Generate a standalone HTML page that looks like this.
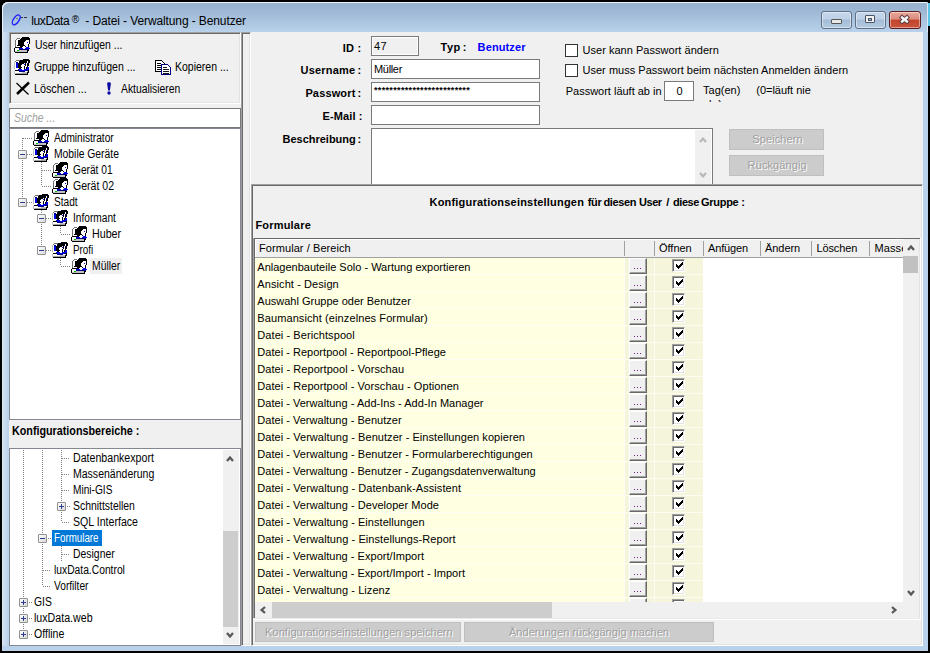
<!DOCTYPE html>
<html lang="de"><head><meta charset="utf-8"><title>luxData - Datei - Verwaltung - Benutzer</title>
<style>
html,body{margin:0;padding:0;background:#000;}
body{width:930px;height:653px;position:relative;overflow:hidden;font-family:"Liberation Sans", sans-serif;font-size:11px;}
div,span,svg{position:absolute;box-sizing:content-box;}
span{white-space:nowrap;}
</style></head><body>
<div style="left:0px;top:0px;width:930px;height:653px;background:#000;"></div>
<div style="left:2px;top:2px;width:926px;height:649px;background:#b9d1ea;border-radius:6px 2px 0 0;"></div>
<div style="left:2px;top:2px;width:926px;height:30px;border-radius:6px 2px 0 0;background:linear-gradient(#98b3d0,#9ab5d2 20%,#b9d1ea 100%);box-shadow:inset 1px 1px 0 #eef3f9, inset -1px 0 0 #dfe9f5;"></div>
<div style="left:2px;top:32px;width:7px;height:614px;background:linear-gradient(90deg,#e4edf7 0,#d3e1f1 1px,#c4d7ed 4px,#b9d1ea 7px);"></div>
<div style="left:928px;top:3px;width:2px;height:23px;background:#5cc4e4;"></div>
<svg style="left:9px;top:12px" width="22" height="16" viewBox="0 0 22 16"><ellipse cx="7.2" cy="7.9" rx="2.7" ry="5.6" transform="rotate(34 7.2 7.9)" fill="none" stroke="#1a1aff" stroke-width="1.35"/><rect x="7" y="6" width="2" height="1" fill="#776"/><rect x="12" y="5" width="2" height="1" fill="#333"/><rect x="15" y="5" width="3" height="1" fill="#333"/></svg>
<span style="left:31.30px;top:13.84px;font-size:12px;line-height:14px;color:#000;letter-spacing:-0.398px;">luxData</span>
<span style="left:71.80px;top:13.73px;font-size:10px;line-height:12px;color:#000;letter-spacing:1.025px;">®</span>
<span style="left:85.30px;top:13.84px;font-size:12px;line-height:14px;color:#000;letter-spacing:-0.109px;">- Datei - Verwaltung - Benutzer</span>
<div style="left:821px;top:11px;width:29px;height:16px;border:1px solid #5f6f86;border-radius:3px;background:linear-gradient(#c3d6eb 0%,#bdd0e6 45%,#a3bbd6 50%,#b4cae2 100%);box-shadow:inset 0 0 0 1px rgba(255,255,255,.45);"></div>
<div style="left:855px;top:11px;width:29px;height:16px;border:1px solid #5f6f86;border-radius:3px;background:linear-gradient(#c3d6eb 0%,#bdd0e6 45%,#a3bbd6 50%,#b4cae2 100%);box-shadow:inset 0 0 0 1px rgba(255,255,255,.45);"></div>
<div style="left:889px;top:11px;width:30px;height:16px;border:1px solid #5a1e1e;border-radius:3px;background:linear-gradient(#e9a99c 0%,#d98b7c 45%,#c4442b 50%,#c8553b 100%);box-shadow:inset 0 0 0 1px rgba(255,255,255,.45);"></div>
<div style="left:831px;top:19px;width:9px;height:3px;background:#e8e8e8;border:1px solid #555;border-radius:1px;"></div>
<div style="left:865px;top:15px;width:8px;height:6px;border:1px solid #4c5566;background:#f2f2f2;border-radius:1px;"></div><div style="left:868px;top:18px;width:2px;height:1px;border:1px solid #4c5566;background:#9db6d4;"></div>
<svg style="left:898px;top:14px" width="13" height="11" viewBox="0 0 13 11"><path d="M2.4 2.1 L10.6 8.9 M10.6 2.1 L2.4 8.9" stroke="#50343a" stroke-width="4.2"/><path d="M3.1 2.7 L9.9 8.3 M9.9 2.7 L3.1 8.3" stroke="#f6f6f6" stroke-width="2.4"/></svg>
<div style="left:9px;top:32px;width:914px;height:614px;background:#f0f0f0;"></div>
<div style="left:9px;top:32px;width:230px;height:70px;background:#f0f0f0;border:1px solid;border-color:#a0a0a0 #fff #fff #a0a0a0;box-shadow:inset 1px 1px 0 #696969, inset -1px -1px 0 #e3e3e3;"></div>
<svg style="left:14px;top:37px" width="16" height="16" viewBox="0 0 16 16" shape-rendering="crispEdges"><rect x="8" y="0" width="7" height="1" fill="#000"/><rect x="3" y="1" width="3" height="1" fill="#707070"/><rect x="7" y="1" width="9" height="1" fill="#000"/><rect x="2" y="2" width="1" height="1" fill="#707070"/><rect x="3" y="2" width="3" height="1" fill="#fff"/><rect x="6" y="2" width="10" height="1" fill="#000"/><rect x="1" y="3" width="1" height="1" fill="#707070"/><rect x="2" y="3" width="2" height="1" fill="#fff"/><rect x="4" y="3" width="8" height="1" fill="#000"/><rect x="12" y="3" width="3" height="1" fill="#fff"/><rect x="15" y="3" width="1" height="1" fill="#000"/><rect x="1" y="4" width="1" height="1" fill="#707070"/><rect x="2" y="4" width="2" height="1" fill="#fff"/><rect x="4" y="4" width="7" height="1" fill="#000"/><rect x="11" y="4" width="4" height="1" fill="#fff"/><rect x="15" y="4" width="1" height="1" fill="#000"/><rect x="1" y="5" width="1" height="1" fill="#707070"/><rect x="2" y="5" width="2" height="1" fill="#fff"/><rect x="4" y="5" width="6" height="1" fill="#000"/><rect x="10" y="5" width="3" height="1" fill="#fff"/><rect x="13" y="5" width="1" height="1" fill="#0000e0"/><rect x="14" y="5" width="1" height="1" fill="#fff"/><rect x="15" y="5" width="1" height="1" fill="#000"/><rect x="1" y="6" width="1" height="1" fill="#707070"/><rect x="2" y="6" width="2" height="1" fill="#fff"/><rect x="4" y="6" width="6" height="1" fill="#000"/><rect x="10" y="6" width="5" height="1" fill="#fff"/><rect x="15" y="6" width="1" height="1" fill="#000"/><rect x="1" y="7" width="1" height="1" fill="#707070"/><rect x="2" y="7" width="2" height="1" fill="#fff"/><rect x="4" y="7" width="6" height="1" fill="#000"/><rect x="10" y="7" width="4" height="1" fill="#fff"/><rect x="14" y="7" width="1" height="1" fill="#000"/><rect x="1" y="8" width="1" height="1" fill="#707070"/><rect x="2" y="8" width="1" height="1" fill="#fff"/><rect x="3" y="8" width="8" height="1" fill="#000"/><rect x="11" y="8" width="3" height="1" fill="#fff"/><rect x="14" y="8" width="1" height="1" fill="#000"/><rect x="1" y="9" width="1" height="1" fill="#707070"/><rect x="2" y="9" width="4" height="1" fill="#fff"/><rect x="6" y="9" width="3" height="1" fill="#000"/><rect x="9" y="9" width="2" height="1" fill="#fff"/><rect x="11" y="9" width="1" height="1" fill="#000"/><rect x="12" y="9" width="2" height="1" fill="#fff"/><rect x="14" y="9" width="1" height="1" fill="#000"/><rect x="1" y="10" width="7" height="1" fill="#000"/><rect x="8" y="10" width="4" height="1" fill="#fff"/><rect x="12" y="10" width="3" height="1" fill="#0000e0"/><rect x="0" y="11" width="1" height="1" fill="#000"/><rect x="1" y="11" width="4" height="1" fill="#fff"/><rect x="5" y="11" width="4" height="1" fill="#0000e0"/><rect x="9" y="11" width="2" height="1" fill="#fff"/><rect x="11" y="11" width="5" height="1" fill="#0000e0"/><rect x="0" y="12" width="1" height="1" fill="#000"/><rect x="1" y="12" width="4" height="1" fill="#fff"/><rect x="5" y="12" width="10" height="1" fill="#000080"/><rect x="0" y="13" width="1" height="1" fill="#000"/><rect x="1" y="13" width="2" height="1" fill="#fff"/><rect x="3" y="13" width="2" height="1" fill="#00c000"/><rect x="5" y="13" width="8" height="1" fill="#c0c0c0"/><rect x="13" y="13" width="2" height="1" fill="#000"/><rect x="0" y="14" width="1" height="1" fill="#000"/><rect x="1" y="14" width="12" height="1" fill="#c0c0c0"/><rect x="13" y="14" width="1" height="1" fill="#000"/><rect x="1" y="15" width="13" height="1" fill="#000"/></svg>
<span style="left:34.50px;top:37.84px;font-size:12px;line-height:14px;color:#000;transform:scaleX(0.8686);transform-origin:0 0;">User hinzufügen ...</span>
<svg style="left:14px;top:59px" width="16" height="16" viewBox="0 0 16 16" shape-rendering="crispEdges"><rect x="9" y="0" width="6" height="1" fill="#000"/><rect x="2" y="1" width="4" height="1" fill="#707070"/><rect x="6" y="1" width="10" height="1" fill="#000"/><rect x="1" y="2" width="1" height="1" fill="#707070"/><rect x="2" y="2" width="3" height="1" fill="#fff"/><rect x="5" y="2" width="8" height="1" fill="#000"/><rect x="13" y="2" width="1" height="1" fill="#fff"/><rect x="14" y="2" width="2" height="1" fill="#000"/><rect x="0" y="3" width="1" height="1" fill="#c0c0c0"/><rect x="1" y="3" width="1" height="1" fill="#fff"/><rect x="2" y="3" width="2" height="1" fill="#000080"/><rect x="4" y="3" width="1" height="1" fill="#fff"/><rect x="5" y="3" width="8" height="1" fill="#000"/><rect x="13" y="3" width="1" height="1" fill="#fff"/><rect x="14" y="3" width="2" height="1" fill="#000"/><rect x="0" y="4" width="1" height="1" fill="#c0c0c0"/><rect x="1" y="4" width="1" height="1" fill="#fff"/><rect x="2" y="4" width="2" height="1" fill="#0000e0"/><rect x="4" y="4" width="6" height="1" fill="#000"/><rect x="10" y="4" width="1" height="1" fill="#fff"/><rect x="11" y="4" width="1" height="1" fill="#000"/><rect x="12" y="4" width="1" height="1" fill="#fff"/><rect x="13" y="4" width="1" height="1" fill="#0000e0"/><rect x="14" y="4" width="1" height="1" fill="#000"/><rect x="0" y="5" width="1" height="1" fill="#c0c0c0"/><rect x="1" y="5" width="1" height="1" fill="#fff"/><rect x="2" y="5" width="2" height="1" fill="#0000e0"/><rect x="4" y="5" width="4" height="1" fill="#000"/><rect x="8" y="5" width="2" height="1" fill="#fff"/><rect x="10" y="5" width="1" height="1" fill="#0000e0"/><rect x="11" y="5" width="1" height="1" fill="#000"/><rect x="12" y="5" width="1" height="1" fill="#fff"/><rect x="13" y="5" width="2" height="1" fill="#000"/><rect x="0" y="6" width="1" height="1" fill="#c0c0c0"/><rect x="1" y="6" width="1" height="1" fill="#fff"/><rect x="2" y="6" width="2" height="1" fill="#0000e0"/><rect x="4" y="6" width="3" height="1" fill="#000"/><rect x="7" y="6" width="4" height="1" fill="#fff"/><rect x="11" y="6" width="1" height="1" fill="#000"/><rect x="12" y="6" width="1" height="1" fill="#fff"/><rect x="13" y="6" width="2" height="1" fill="#000"/><rect x="0" y="7" width="1" height="1" fill="#c0c0c0"/><rect x="1" y="7" width="1" height="1" fill="#fff"/><rect x="2" y="7" width="2" height="1" fill="#0000e0"/><rect x="4" y="7" width="3" height="1" fill="#000"/><rect x="7" y="7" width="3" height="1" fill="#fff"/><rect x="10" y="7" width="1" height="1" fill="#000"/><rect x="11" y="7" width="2" height="1" fill="#fff"/><rect x="13" y="7" width="1" height="1" fill="#000"/><rect x="0" y="8" width="1" height="1" fill="#c0c0c0"/><rect x="1" y="8" width="1" height="1" fill="#fff"/><rect x="2" y="8" width="2" height="1" fill="#0000e0"/><rect x="4" y="8" width="4" height="1" fill="#000"/><rect x="8" y="8" width="2" height="1" fill="#fff"/><rect x="10" y="8" width="1" height="1" fill="#000"/><rect x="11" y="8" width="1" height="1" fill="#fff"/><rect x="12" y="8" width="1" height="1" fill="#000"/><rect x="13" y="8" width="2" height="1" fill="#0000e0"/><rect x="0" y="9" width="1" height="1" fill="#c0c0c0"/><rect x="1" y="9" width="4" height="1" fill="#fff"/><rect x="5" y="9" width="2" height="1" fill="#000"/><rect x="7" y="9" width="3" height="1" fill="#fff"/><rect x="10" y="9" width="1" height="1" fill="#000"/><rect x="11" y="9" width="1" height="1" fill="#fff"/><rect x="12" y="9" width="1" height="1" fill="#000"/><rect x="13" y="9" width="2" height="1" fill="#0000e0"/><rect x="1" y="10" width="3" height="1" fill="#fff"/><rect x="4" y="10" width="4" height="1" fill="#0000e0"/><rect x="8" y="10" width="2" height="1" fill="#fff"/><rect x="10" y="10" width="5" height="1" fill="#0000e0"/><rect x="1" y="11" width="4" height="1" fill="#000"/><rect x="5" y="11" width="7" height="1" fill="#0000e0"/><rect x="12" y="11" width="2" height="1" fill="#000080"/><rect x="14" y="11" width="1" height="1" fill="#000"/><rect x="0" y="12" width="1" height="1" fill="#c0c0c0"/><rect x="1" y="12" width="4" height="1" fill="#fff"/><rect x="5" y="12" width="6" height="1" fill="#000080"/><rect x="11" y="12" width="2" height="1" fill="#fff"/><rect x="13" y="12" width="1" height="1" fill="#c0c0c0"/><rect x="14" y="12" width="1" height="1" fill="#000"/><rect x="0" y="13" width="1" height="1" fill="#c0c0c0"/><rect x="1" y="13" width="7" height="1" fill="#fff"/><rect x="8" y="13" width="5" height="1" fill="#c0c0c0"/><rect x="13" y="13" width="2" height="1" fill="#000"/><rect x="0" y="14" width="2" height="1" fill="#c0c0c0"/><rect x="2" y="14" width="11" height="1" fill="#a0a0a0"/><rect x="13" y="14" width="1" height="1" fill="#000"/><rect x="1" y="15" width="13" height="1" fill="#000"/></svg>
<span style="left:33.50px;top:60.04px;font-size:12px;line-height:14px;color:#000;transform:scaleX(0.8794);transform-origin:0 0;">Gruppe hinzufügen ...</span>
<svg style="left:155px;top:60px" width="17" height="16" viewBox="0 0 17 16" shape-rendering="crispEdges"><path d="M0.5 0.5h6l3 3v8h-9z" fill="#fff" stroke="#000"/><path d="M2 3h4M2 5h5M2 7h5M2 9h5" stroke="#000"/><path d="M6.5 4.5h6l3 3v7h-9z" fill="#fff" stroke="#000080"/><path d="M8 7h4M8 9h6M8 11h6M8 13h6" stroke="#000" stroke-width="0.9"/></svg>
<span style="left:175.20px;top:60.24px;font-size:12px;line-height:14px;color:#000;transform:scaleX(0.8749);transform-origin:0 0;">Kopieren ...</span>
<svg style="left:15px;top:81px" width="16" height="16" viewBox="0 0 16 16"><path d="M1.5 2 L13.5 13.5" stroke="#000" stroke-width="1.2"/><path d="M14 1.5 L2 13" stroke="#000" stroke-width="2.6"/></svg>
<span style="left:33.60px;top:82.04px;font-size:12px;line-height:14px;color:#000;transform:scaleX(0.8975);transform-origin:0 0;">Löschen ...</span>
<svg style="left:105px;top:81px" width="8" height="15" viewBox="0 0 8 15"><path d="M2.1 2.6 Q2.1 1.2 4 1.2 Q5.9 1.2 5.9 2.6 L4.9 9.4 H3.1 Z" fill="#0a0aa0"/><circle cx="4" cy="12" r="1.7" fill="#0a0aa0"/></svg>
<span style="left:121.30px;top:81.94px;font-size:12px;line-height:14px;color:#000;transform:scaleX(0.8631);transform-origin:0 0;">Aktualisieren</span>
<div style="left:9px;top:108px;width:230px;height:18px;background:#fff;border:1px solid #7a7a7a;"></div>
<span style="left:13.50px;top:111.04px;font-size:12px;line-height:14px;color:#a0a0a0;font-style:italic;transform:scaleX(0.8718);transform-origin:0 0;">Suche ...</span>
<div style="left:9px;top:128px;width:230px;height:290px;background:#fff;border:1px solid #828790;"></div>
<div style="left:22px;top:138px;width:1px;height:64px;background:repeating-linear-gradient(180deg,#808080 0 1px,transparent 1px 2px);"></div>
<div style="left:41px;top:162px;width:1px;height:24px;background:repeating-linear-gradient(180deg,#808080 0 1px,transparent 1px 2px);"></div>
<div style="left:41px;top:210px;width:1px;height:40px;background:repeating-linear-gradient(180deg,#808080 0 1px,transparent 1px 2px);"></div>
<div style="left:60px;top:226px;width:1px;height:8px;background:repeating-linear-gradient(180deg,#808080 0 1px,transparent 1px 2px);"></div>
<div style="left:60px;top:258px;width:1px;height:8px;background:repeating-linear-gradient(180deg,#808080 0 1px,transparent 1px 2px);"></div>
<div style="left:23px;top:138px;width:10px;height:1px;background:repeating-linear-gradient(90deg,#808080 0 1px,transparent 1px 2px);"></div>
<svg style="left:33px;top:130px" width="16" height="16" viewBox="0 0 16 16" shape-rendering="crispEdges"><rect x="8" y="0" width="7" height="1" fill="#000"/><rect x="3" y="1" width="3" height="1" fill="#707070"/><rect x="7" y="1" width="9" height="1" fill="#000"/><rect x="2" y="2" width="1" height="1" fill="#707070"/><rect x="3" y="2" width="3" height="1" fill="#fff"/><rect x="6" y="2" width="10" height="1" fill="#000"/><rect x="1" y="3" width="1" height="1" fill="#707070"/><rect x="2" y="3" width="2" height="1" fill="#fff"/><rect x="4" y="3" width="8" height="1" fill="#000"/><rect x="12" y="3" width="3" height="1" fill="#fff"/><rect x="15" y="3" width="1" height="1" fill="#000"/><rect x="1" y="4" width="1" height="1" fill="#707070"/><rect x="2" y="4" width="2" height="1" fill="#fff"/><rect x="4" y="4" width="7" height="1" fill="#000"/><rect x="11" y="4" width="4" height="1" fill="#fff"/><rect x="15" y="4" width="1" height="1" fill="#000"/><rect x="1" y="5" width="1" height="1" fill="#707070"/><rect x="2" y="5" width="2" height="1" fill="#fff"/><rect x="4" y="5" width="6" height="1" fill="#000"/><rect x="10" y="5" width="3" height="1" fill="#fff"/><rect x="13" y="5" width="1" height="1" fill="#0000e0"/><rect x="14" y="5" width="1" height="1" fill="#fff"/><rect x="15" y="5" width="1" height="1" fill="#000"/><rect x="1" y="6" width="1" height="1" fill="#707070"/><rect x="2" y="6" width="2" height="1" fill="#fff"/><rect x="4" y="6" width="6" height="1" fill="#000"/><rect x="10" y="6" width="5" height="1" fill="#fff"/><rect x="15" y="6" width="1" height="1" fill="#000"/><rect x="1" y="7" width="1" height="1" fill="#707070"/><rect x="2" y="7" width="2" height="1" fill="#fff"/><rect x="4" y="7" width="6" height="1" fill="#000"/><rect x="10" y="7" width="4" height="1" fill="#fff"/><rect x="14" y="7" width="1" height="1" fill="#000"/><rect x="1" y="8" width="1" height="1" fill="#707070"/><rect x="2" y="8" width="1" height="1" fill="#fff"/><rect x="3" y="8" width="8" height="1" fill="#000"/><rect x="11" y="8" width="3" height="1" fill="#fff"/><rect x="14" y="8" width="1" height="1" fill="#000"/><rect x="1" y="9" width="1" height="1" fill="#707070"/><rect x="2" y="9" width="4" height="1" fill="#fff"/><rect x="6" y="9" width="3" height="1" fill="#000"/><rect x="9" y="9" width="2" height="1" fill="#fff"/><rect x="11" y="9" width="1" height="1" fill="#000"/><rect x="12" y="9" width="2" height="1" fill="#fff"/><rect x="14" y="9" width="1" height="1" fill="#000"/><rect x="1" y="10" width="7" height="1" fill="#000"/><rect x="8" y="10" width="4" height="1" fill="#fff"/><rect x="12" y="10" width="3" height="1" fill="#0000e0"/><rect x="0" y="11" width="1" height="1" fill="#000"/><rect x="1" y="11" width="4" height="1" fill="#fff"/><rect x="5" y="11" width="4" height="1" fill="#0000e0"/><rect x="9" y="11" width="2" height="1" fill="#fff"/><rect x="11" y="11" width="5" height="1" fill="#0000e0"/><rect x="0" y="12" width="1" height="1" fill="#000"/><rect x="1" y="12" width="4" height="1" fill="#fff"/><rect x="5" y="12" width="10" height="1" fill="#000080"/><rect x="0" y="13" width="1" height="1" fill="#000"/><rect x="1" y="13" width="2" height="1" fill="#fff"/><rect x="3" y="13" width="2" height="1" fill="#00c000"/><rect x="5" y="13" width="8" height="1" fill="#c0c0c0"/><rect x="13" y="13" width="2" height="1" fill="#000"/><rect x="0" y="14" width="1" height="1" fill="#000"/><rect x="1" y="14" width="12" height="1" fill="#c0c0c0"/><rect x="13" y="14" width="1" height="1" fill="#000"/><rect x="1" y="15" width="13" height="1" fill="#000"/></svg>
<span style="left:54.20px;top:131.14px;font-size:12px;line-height:14px;color:#000;transform:scaleX(0.8446);transform-origin:0 0;">Administrator</span>
<div style="left:27px;top:154px;width:6px;height:1px;background:repeating-linear-gradient(90deg,#808080 0 1px,transparent 1px 2px);"></div>
<div style="left:18px;top:150px;width:7px;height:7px;border:1px solid #919191;border-radius:1px;background:linear-gradient(135deg,#fff,#d8d8d8);"></div>
<div style="left:20px;top:154px;width:5px;height:1px;background:#2b3f8c;"></div>
<svg style="left:33px;top:146px" width="16" height="16" viewBox="0 0 16 16" shape-rendering="crispEdges"><rect x="9" y="0" width="6" height="1" fill="#000"/><rect x="2" y="1" width="4" height="1" fill="#707070"/><rect x="6" y="1" width="10" height="1" fill="#000"/><rect x="1" y="2" width="1" height="1" fill="#707070"/><rect x="2" y="2" width="3" height="1" fill="#fff"/><rect x="5" y="2" width="8" height="1" fill="#000"/><rect x="13" y="2" width="1" height="1" fill="#fff"/><rect x="14" y="2" width="2" height="1" fill="#000"/><rect x="0" y="3" width="1" height="1" fill="#c0c0c0"/><rect x="1" y="3" width="1" height="1" fill="#fff"/><rect x="2" y="3" width="2" height="1" fill="#000080"/><rect x="4" y="3" width="1" height="1" fill="#fff"/><rect x="5" y="3" width="8" height="1" fill="#000"/><rect x="13" y="3" width="1" height="1" fill="#fff"/><rect x="14" y="3" width="2" height="1" fill="#000"/><rect x="0" y="4" width="1" height="1" fill="#c0c0c0"/><rect x="1" y="4" width="1" height="1" fill="#fff"/><rect x="2" y="4" width="2" height="1" fill="#0000e0"/><rect x="4" y="4" width="6" height="1" fill="#000"/><rect x="10" y="4" width="1" height="1" fill="#fff"/><rect x="11" y="4" width="1" height="1" fill="#000"/><rect x="12" y="4" width="1" height="1" fill="#fff"/><rect x="13" y="4" width="1" height="1" fill="#0000e0"/><rect x="14" y="4" width="1" height="1" fill="#000"/><rect x="0" y="5" width="1" height="1" fill="#c0c0c0"/><rect x="1" y="5" width="1" height="1" fill="#fff"/><rect x="2" y="5" width="2" height="1" fill="#0000e0"/><rect x="4" y="5" width="4" height="1" fill="#000"/><rect x="8" y="5" width="2" height="1" fill="#fff"/><rect x="10" y="5" width="1" height="1" fill="#0000e0"/><rect x="11" y="5" width="1" height="1" fill="#000"/><rect x="12" y="5" width="1" height="1" fill="#fff"/><rect x="13" y="5" width="2" height="1" fill="#000"/><rect x="0" y="6" width="1" height="1" fill="#c0c0c0"/><rect x="1" y="6" width="1" height="1" fill="#fff"/><rect x="2" y="6" width="2" height="1" fill="#0000e0"/><rect x="4" y="6" width="3" height="1" fill="#000"/><rect x="7" y="6" width="4" height="1" fill="#fff"/><rect x="11" y="6" width="1" height="1" fill="#000"/><rect x="12" y="6" width="1" height="1" fill="#fff"/><rect x="13" y="6" width="2" height="1" fill="#000"/><rect x="0" y="7" width="1" height="1" fill="#c0c0c0"/><rect x="1" y="7" width="1" height="1" fill="#fff"/><rect x="2" y="7" width="2" height="1" fill="#0000e0"/><rect x="4" y="7" width="3" height="1" fill="#000"/><rect x="7" y="7" width="3" height="1" fill="#fff"/><rect x="10" y="7" width="1" height="1" fill="#000"/><rect x="11" y="7" width="2" height="1" fill="#fff"/><rect x="13" y="7" width="1" height="1" fill="#000"/><rect x="0" y="8" width="1" height="1" fill="#c0c0c0"/><rect x="1" y="8" width="1" height="1" fill="#fff"/><rect x="2" y="8" width="2" height="1" fill="#0000e0"/><rect x="4" y="8" width="4" height="1" fill="#000"/><rect x="8" y="8" width="2" height="1" fill="#fff"/><rect x="10" y="8" width="1" height="1" fill="#000"/><rect x="11" y="8" width="1" height="1" fill="#fff"/><rect x="12" y="8" width="1" height="1" fill="#000"/><rect x="13" y="8" width="2" height="1" fill="#0000e0"/><rect x="0" y="9" width="1" height="1" fill="#c0c0c0"/><rect x="1" y="9" width="4" height="1" fill="#fff"/><rect x="5" y="9" width="2" height="1" fill="#000"/><rect x="7" y="9" width="3" height="1" fill="#fff"/><rect x="10" y="9" width="1" height="1" fill="#000"/><rect x="11" y="9" width="1" height="1" fill="#fff"/><rect x="12" y="9" width="1" height="1" fill="#000"/><rect x="13" y="9" width="2" height="1" fill="#0000e0"/><rect x="1" y="10" width="3" height="1" fill="#fff"/><rect x="4" y="10" width="4" height="1" fill="#0000e0"/><rect x="8" y="10" width="2" height="1" fill="#fff"/><rect x="10" y="10" width="5" height="1" fill="#0000e0"/><rect x="1" y="11" width="4" height="1" fill="#000"/><rect x="5" y="11" width="7" height="1" fill="#0000e0"/><rect x="12" y="11" width="2" height="1" fill="#000080"/><rect x="14" y="11" width="1" height="1" fill="#000"/><rect x="0" y="12" width="1" height="1" fill="#c0c0c0"/><rect x="1" y="12" width="4" height="1" fill="#fff"/><rect x="5" y="12" width="6" height="1" fill="#000080"/><rect x="11" y="12" width="2" height="1" fill="#fff"/><rect x="13" y="12" width="1" height="1" fill="#c0c0c0"/><rect x="14" y="12" width="1" height="1" fill="#000"/><rect x="0" y="13" width="1" height="1" fill="#c0c0c0"/><rect x="1" y="13" width="7" height="1" fill="#fff"/><rect x="8" y="13" width="5" height="1" fill="#c0c0c0"/><rect x="13" y="13" width="2" height="1" fill="#000"/><rect x="0" y="14" width="2" height="1" fill="#c0c0c0"/><rect x="2" y="14" width="11" height="1" fill="#a0a0a0"/><rect x="13" y="14" width="1" height="1" fill="#000"/><rect x="1" y="15" width="13" height="1" fill="#000"/></svg>
<span style="left:54.20px;top:147.14px;font-size:12px;line-height:14px;color:#000;transform:scaleX(0.8610);transform-origin:0 0;">Mobile Geräte</span>
<div style="left:42px;top:170px;width:10px;height:1px;background:repeating-linear-gradient(90deg,#808080 0 1px,transparent 1px 2px);"></div>
<svg style="left:52px;top:162px" width="16" height="16" viewBox="0 0 16 16" shape-rendering="crispEdges"><rect x="8" y="0" width="7" height="1" fill="#000"/><rect x="3" y="1" width="3" height="1" fill="#707070"/><rect x="7" y="1" width="9" height="1" fill="#000"/><rect x="2" y="2" width="1" height="1" fill="#707070"/><rect x="3" y="2" width="3" height="1" fill="#fff"/><rect x="6" y="2" width="10" height="1" fill="#000"/><rect x="1" y="3" width="1" height="1" fill="#707070"/><rect x="2" y="3" width="2" height="1" fill="#fff"/><rect x="4" y="3" width="8" height="1" fill="#000"/><rect x="12" y="3" width="3" height="1" fill="#fff"/><rect x="15" y="3" width="1" height="1" fill="#000"/><rect x="1" y="4" width="1" height="1" fill="#707070"/><rect x="2" y="4" width="2" height="1" fill="#fff"/><rect x="4" y="4" width="7" height="1" fill="#000"/><rect x="11" y="4" width="4" height="1" fill="#fff"/><rect x="15" y="4" width="1" height="1" fill="#000"/><rect x="1" y="5" width="1" height="1" fill="#707070"/><rect x="2" y="5" width="2" height="1" fill="#fff"/><rect x="4" y="5" width="6" height="1" fill="#000"/><rect x="10" y="5" width="3" height="1" fill="#fff"/><rect x="13" y="5" width="1" height="1" fill="#0000e0"/><rect x="14" y="5" width="1" height="1" fill="#fff"/><rect x="15" y="5" width="1" height="1" fill="#000"/><rect x="1" y="6" width="1" height="1" fill="#707070"/><rect x="2" y="6" width="2" height="1" fill="#fff"/><rect x="4" y="6" width="6" height="1" fill="#000"/><rect x="10" y="6" width="5" height="1" fill="#fff"/><rect x="15" y="6" width="1" height="1" fill="#000"/><rect x="1" y="7" width="1" height="1" fill="#707070"/><rect x="2" y="7" width="2" height="1" fill="#fff"/><rect x="4" y="7" width="6" height="1" fill="#000"/><rect x="10" y="7" width="4" height="1" fill="#fff"/><rect x="14" y="7" width="1" height="1" fill="#000"/><rect x="1" y="8" width="1" height="1" fill="#707070"/><rect x="2" y="8" width="1" height="1" fill="#fff"/><rect x="3" y="8" width="8" height="1" fill="#000"/><rect x="11" y="8" width="3" height="1" fill="#fff"/><rect x="14" y="8" width="1" height="1" fill="#000"/><rect x="1" y="9" width="1" height="1" fill="#707070"/><rect x="2" y="9" width="4" height="1" fill="#fff"/><rect x="6" y="9" width="3" height="1" fill="#000"/><rect x="9" y="9" width="2" height="1" fill="#fff"/><rect x="11" y="9" width="1" height="1" fill="#000"/><rect x="12" y="9" width="2" height="1" fill="#fff"/><rect x="14" y="9" width="1" height="1" fill="#000"/><rect x="1" y="10" width="7" height="1" fill="#000"/><rect x="8" y="10" width="4" height="1" fill="#fff"/><rect x="12" y="10" width="3" height="1" fill="#0000e0"/><rect x="0" y="11" width="1" height="1" fill="#000"/><rect x="1" y="11" width="4" height="1" fill="#fff"/><rect x="5" y="11" width="4" height="1" fill="#0000e0"/><rect x="9" y="11" width="2" height="1" fill="#fff"/><rect x="11" y="11" width="5" height="1" fill="#0000e0"/><rect x="0" y="12" width="1" height="1" fill="#000"/><rect x="1" y="12" width="4" height="1" fill="#fff"/><rect x="5" y="12" width="10" height="1" fill="#000080"/><rect x="0" y="13" width="1" height="1" fill="#000"/><rect x="1" y="13" width="2" height="1" fill="#fff"/><rect x="3" y="13" width="2" height="1" fill="#00c000"/><rect x="5" y="13" width="8" height="1" fill="#c0c0c0"/><rect x="13" y="13" width="2" height="1" fill="#000"/><rect x="0" y="14" width="1" height="1" fill="#000"/><rect x="1" y="14" width="12" height="1" fill="#c0c0c0"/><rect x="13" y="14" width="1" height="1" fill="#000"/><rect x="1" y="15" width="13" height="1" fill="#000"/></svg>
<span style="left:72.90px;top:163.14px;font-size:12px;line-height:14px;color:#000;transform:scaleX(0.8479);transform-origin:0 0;">Gerät 01</span>
<div style="left:42px;top:186px;width:10px;height:1px;background:repeating-linear-gradient(90deg,#808080 0 1px,transparent 1px 2px);"></div>
<svg style="left:52px;top:178px" width="16" height="16" viewBox="0 0 16 16" shape-rendering="crispEdges"><rect x="8" y="0" width="7" height="1" fill="#000"/><rect x="3" y="1" width="3" height="1" fill="#707070"/><rect x="7" y="1" width="9" height="1" fill="#000"/><rect x="2" y="2" width="1" height="1" fill="#707070"/><rect x="3" y="2" width="3" height="1" fill="#fff"/><rect x="6" y="2" width="10" height="1" fill="#000"/><rect x="1" y="3" width="1" height="1" fill="#707070"/><rect x="2" y="3" width="2" height="1" fill="#fff"/><rect x="4" y="3" width="8" height="1" fill="#000"/><rect x="12" y="3" width="3" height="1" fill="#fff"/><rect x="15" y="3" width="1" height="1" fill="#000"/><rect x="1" y="4" width="1" height="1" fill="#707070"/><rect x="2" y="4" width="2" height="1" fill="#fff"/><rect x="4" y="4" width="7" height="1" fill="#000"/><rect x="11" y="4" width="4" height="1" fill="#fff"/><rect x="15" y="4" width="1" height="1" fill="#000"/><rect x="1" y="5" width="1" height="1" fill="#707070"/><rect x="2" y="5" width="2" height="1" fill="#fff"/><rect x="4" y="5" width="6" height="1" fill="#000"/><rect x="10" y="5" width="3" height="1" fill="#fff"/><rect x="13" y="5" width="1" height="1" fill="#0000e0"/><rect x="14" y="5" width="1" height="1" fill="#fff"/><rect x="15" y="5" width="1" height="1" fill="#000"/><rect x="1" y="6" width="1" height="1" fill="#707070"/><rect x="2" y="6" width="2" height="1" fill="#fff"/><rect x="4" y="6" width="6" height="1" fill="#000"/><rect x="10" y="6" width="5" height="1" fill="#fff"/><rect x="15" y="6" width="1" height="1" fill="#000"/><rect x="1" y="7" width="1" height="1" fill="#707070"/><rect x="2" y="7" width="2" height="1" fill="#fff"/><rect x="4" y="7" width="6" height="1" fill="#000"/><rect x="10" y="7" width="4" height="1" fill="#fff"/><rect x="14" y="7" width="1" height="1" fill="#000"/><rect x="1" y="8" width="1" height="1" fill="#707070"/><rect x="2" y="8" width="1" height="1" fill="#fff"/><rect x="3" y="8" width="8" height="1" fill="#000"/><rect x="11" y="8" width="3" height="1" fill="#fff"/><rect x="14" y="8" width="1" height="1" fill="#000"/><rect x="1" y="9" width="1" height="1" fill="#707070"/><rect x="2" y="9" width="4" height="1" fill="#fff"/><rect x="6" y="9" width="3" height="1" fill="#000"/><rect x="9" y="9" width="2" height="1" fill="#fff"/><rect x="11" y="9" width="1" height="1" fill="#000"/><rect x="12" y="9" width="2" height="1" fill="#fff"/><rect x="14" y="9" width="1" height="1" fill="#000"/><rect x="1" y="10" width="7" height="1" fill="#000"/><rect x="8" y="10" width="4" height="1" fill="#fff"/><rect x="12" y="10" width="3" height="1" fill="#0000e0"/><rect x="0" y="11" width="1" height="1" fill="#000"/><rect x="1" y="11" width="4" height="1" fill="#fff"/><rect x="5" y="11" width="4" height="1" fill="#0000e0"/><rect x="9" y="11" width="2" height="1" fill="#fff"/><rect x="11" y="11" width="5" height="1" fill="#0000e0"/><rect x="0" y="12" width="1" height="1" fill="#000"/><rect x="1" y="12" width="4" height="1" fill="#fff"/><rect x="5" y="12" width="10" height="1" fill="#000080"/><rect x="0" y="13" width="1" height="1" fill="#000"/><rect x="1" y="13" width="2" height="1" fill="#fff"/><rect x="3" y="13" width="2" height="1" fill="#00c000"/><rect x="5" y="13" width="8" height="1" fill="#c0c0c0"/><rect x="13" y="13" width="2" height="1" fill="#000"/><rect x="0" y="14" width="1" height="1" fill="#000"/><rect x="1" y="14" width="12" height="1" fill="#c0c0c0"/><rect x="13" y="14" width="1" height="1" fill="#000"/><rect x="1" y="15" width="13" height="1" fill="#000"/></svg>
<span style="left:72.90px;top:179.14px;font-size:12px;line-height:14px;color:#000;transform:scaleX(0.8779);transform-origin:0 0;">Gerät 02</span>
<div style="left:27px;top:202px;width:6px;height:1px;background:repeating-linear-gradient(90deg,#808080 0 1px,transparent 1px 2px);"></div>
<div style="left:18px;top:198px;width:7px;height:7px;border:1px solid #919191;border-radius:1px;background:linear-gradient(135deg,#fff,#d8d8d8);"></div>
<div style="left:20px;top:202px;width:5px;height:1px;background:#2b3f8c;"></div>
<svg style="left:33px;top:194px" width="16" height="16" viewBox="0 0 16 16" shape-rendering="crispEdges"><rect x="9" y="0" width="6" height="1" fill="#000"/><rect x="2" y="1" width="4" height="1" fill="#707070"/><rect x="6" y="1" width="10" height="1" fill="#000"/><rect x="1" y="2" width="1" height="1" fill="#707070"/><rect x="2" y="2" width="3" height="1" fill="#fff"/><rect x="5" y="2" width="8" height="1" fill="#000"/><rect x="13" y="2" width="1" height="1" fill="#fff"/><rect x="14" y="2" width="2" height="1" fill="#000"/><rect x="0" y="3" width="1" height="1" fill="#c0c0c0"/><rect x="1" y="3" width="1" height="1" fill="#fff"/><rect x="2" y="3" width="2" height="1" fill="#000080"/><rect x="4" y="3" width="1" height="1" fill="#fff"/><rect x="5" y="3" width="8" height="1" fill="#000"/><rect x="13" y="3" width="1" height="1" fill="#fff"/><rect x="14" y="3" width="2" height="1" fill="#000"/><rect x="0" y="4" width="1" height="1" fill="#c0c0c0"/><rect x="1" y="4" width="1" height="1" fill="#fff"/><rect x="2" y="4" width="2" height="1" fill="#0000e0"/><rect x="4" y="4" width="6" height="1" fill="#000"/><rect x="10" y="4" width="1" height="1" fill="#fff"/><rect x="11" y="4" width="1" height="1" fill="#000"/><rect x="12" y="4" width="1" height="1" fill="#fff"/><rect x="13" y="4" width="1" height="1" fill="#0000e0"/><rect x="14" y="4" width="1" height="1" fill="#000"/><rect x="0" y="5" width="1" height="1" fill="#c0c0c0"/><rect x="1" y="5" width="1" height="1" fill="#fff"/><rect x="2" y="5" width="2" height="1" fill="#0000e0"/><rect x="4" y="5" width="4" height="1" fill="#000"/><rect x="8" y="5" width="2" height="1" fill="#fff"/><rect x="10" y="5" width="1" height="1" fill="#0000e0"/><rect x="11" y="5" width="1" height="1" fill="#000"/><rect x="12" y="5" width="1" height="1" fill="#fff"/><rect x="13" y="5" width="2" height="1" fill="#000"/><rect x="0" y="6" width="1" height="1" fill="#c0c0c0"/><rect x="1" y="6" width="1" height="1" fill="#fff"/><rect x="2" y="6" width="2" height="1" fill="#0000e0"/><rect x="4" y="6" width="3" height="1" fill="#000"/><rect x="7" y="6" width="4" height="1" fill="#fff"/><rect x="11" y="6" width="1" height="1" fill="#000"/><rect x="12" y="6" width="1" height="1" fill="#fff"/><rect x="13" y="6" width="2" height="1" fill="#000"/><rect x="0" y="7" width="1" height="1" fill="#c0c0c0"/><rect x="1" y="7" width="1" height="1" fill="#fff"/><rect x="2" y="7" width="2" height="1" fill="#0000e0"/><rect x="4" y="7" width="3" height="1" fill="#000"/><rect x="7" y="7" width="3" height="1" fill="#fff"/><rect x="10" y="7" width="1" height="1" fill="#000"/><rect x="11" y="7" width="2" height="1" fill="#fff"/><rect x="13" y="7" width="1" height="1" fill="#000"/><rect x="0" y="8" width="1" height="1" fill="#c0c0c0"/><rect x="1" y="8" width="1" height="1" fill="#fff"/><rect x="2" y="8" width="2" height="1" fill="#0000e0"/><rect x="4" y="8" width="4" height="1" fill="#000"/><rect x="8" y="8" width="2" height="1" fill="#fff"/><rect x="10" y="8" width="1" height="1" fill="#000"/><rect x="11" y="8" width="1" height="1" fill="#fff"/><rect x="12" y="8" width="1" height="1" fill="#000"/><rect x="13" y="8" width="2" height="1" fill="#0000e0"/><rect x="0" y="9" width="1" height="1" fill="#c0c0c0"/><rect x="1" y="9" width="4" height="1" fill="#fff"/><rect x="5" y="9" width="2" height="1" fill="#000"/><rect x="7" y="9" width="3" height="1" fill="#fff"/><rect x="10" y="9" width="1" height="1" fill="#000"/><rect x="11" y="9" width="1" height="1" fill="#fff"/><rect x="12" y="9" width="1" height="1" fill="#000"/><rect x="13" y="9" width="2" height="1" fill="#0000e0"/><rect x="1" y="10" width="3" height="1" fill="#fff"/><rect x="4" y="10" width="4" height="1" fill="#0000e0"/><rect x="8" y="10" width="2" height="1" fill="#fff"/><rect x="10" y="10" width="5" height="1" fill="#0000e0"/><rect x="1" y="11" width="4" height="1" fill="#000"/><rect x="5" y="11" width="7" height="1" fill="#0000e0"/><rect x="12" y="11" width="2" height="1" fill="#000080"/><rect x="14" y="11" width="1" height="1" fill="#000"/><rect x="0" y="12" width="1" height="1" fill="#c0c0c0"/><rect x="1" y="12" width="4" height="1" fill="#fff"/><rect x="5" y="12" width="6" height="1" fill="#000080"/><rect x="11" y="12" width="2" height="1" fill="#fff"/><rect x="13" y="12" width="1" height="1" fill="#c0c0c0"/><rect x="14" y="12" width="1" height="1" fill="#000"/><rect x="0" y="13" width="1" height="1" fill="#c0c0c0"/><rect x="1" y="13" width="7" height="1" fill="#fff"/><rect x="8" y="13" width="5" height="1" fill="#c0c0c0"/><rect x="13" y="13" width="2" height="1" fill="#000"/><rect x="0" y="14" width="2" height="1" fill="#c0c0c0"/><rect x="2" y="14" width="11" height="1" fill="#a0a0a0"/><rect x="13" y="14" width="1" height="1" fill="#000"/><rect x="1" y="15" width="13" height="1" fill="#000"/></svg>
<span style="left:54.20px;top:195.14px;font-size:12px;line-height:14px;color:#000;transform:scaleX(0.8419);transform-origin:0 0;">Stadt</span>
<div style="left:46px;top:218px;width:6px;height:1px;background:repeating-linear-gradient(90deg,#808080 0 1px,transparent 1px 2px);"></div>
<div style="left:37px;top:214px;width:7px;height:7px;border:1px solid #919191;border-radius:1px;background:linear-gradient(135deg,#fff,#d8d8d8);"></div>
<div style="left:39px;top:218px;width:5px;height:1px;background:#2b3f8c;"></div>
<svg style="left:52px;top:210px" width="16" height="16" viewBox="0 0 16 16" shape-rendering="crispEdges"><rect x="9" y="0" width="6" height="1" fill="#000"/><rect x="2" y="1" width="4" height="1" fill="#707070"/><rect x="6" y="1" width="10" height="1" fill="#000"/><rect x="1" y="2" width="1" height="1" fill="#707070"/><rect x="2" y="2" width="3" height="1" fill="#fff"/><rect x="5" y="2" width="8" height="1" fill="#000"/><rect x="13" y="2" width="1" height="1" fill="#fff"/><rect x="14" y="2" width="2" height="1" fill="#000"/><rect x="0" y="3" width="1" height="1" fill="#c0c0c0"/><rect x="1" y="3" width="1" height="1" fill="#fff"/><rect x="2" y="3" width="2" height="1" fill="#000080"/><rect x="4" y="3" width="1" height="1" fill="#fff"/><rect x="5" y="3" width="8" height="1" fill="#000"/><rect x="13" y="3" width="1" height="1" fill="#fff"/><rect x="14" y="3" width="2" height="1" fill="#000"/><rect x="0" y="4" width="1" height="1" fill="#c0c0c0"/><rect x="1" y="4" width="1" height="1" fill="#fff"/><rect x="2" y="4" width="2" height="1" fill="#0000e0"/><rect x="4" y="4" width="6" height="1" fill="#000"/><rect x="10" y="4" width="1" height="1" fill="#fff"/><rect x="11" y="4" width="1" height="1" fill="#000"/><rect x="12" y="4" width="1" height="1" fill="#fff"/><rect x="13" y="4" width="1" height="1" fill="#0000e0"/><rect x="14" y="4" width="1" height="1" fill="#000"/><rect x="0" y="5" width="1" height="1" fill="#c0c0c0"/><rect x="1" y="5" width="1" height="1" fill="#fff"/><rect x="2" y="5" width="2" height="1" fill="#0000e0"/><rect x="4" y="5" width="4" height="1" fill="#000"/><rect x="8" y="5" width="2" height="1" fill="#fff"/><rect x="10" y="5" width="1" height="1" fill="#0000e0"/><rect x="11" y="5" width="1" height="1" fill="#000"/><rect x="12" y="5" width="1" height="1" fill="#fff"/><rect x="13" y="5" width="2" height="1" fill="#000"/><rect x="0" y="6" width="1" height="1" fill="#c0c0c0"/><rect x="1" y="6" width="1" height="1" fill="#fff"/><rect x="2" y="6" width="2" height="1" fill="#0000e0"/><rect x="4" y="6" width="3" height="1" fill="#000"/><rect x="7" y="6" width="4" height="1" fill="#fff"/><rect x="11" y="6" width="1" height="1" fill="#000"/><rect x="12" y="6" width="1" height="1" fill="#fff"/><rect x="13" y="6" width="2" height="1" fill="#000"/><rect x="0" y="7" width="1" height="1" fill="#c0c0c0"/><rect x="1" y="7" width="1" height="1" fill="#fff"/><rect x="2" y="7" width="2" height="1" fill="#0000e0"/><rect x="4" y="7" width="3" height="1" fill="#000"/><rect x="7" y="7" width="3" height="1" fill="#fff"/><rect x="10" y="7" width="1" height="1" fill="#000"/><rect x="11" y="7" width="2" height="1" fill="#fff"/><rect x="13" y="7" width="1" height="1" fill="#000"/><rect x="0" y="8" width="1" height="1" fill="#c0c0c0"/><rect x="1" y="8" width="1" height="1" fill="#fff"/><rect x="2" y="8" width="2" height="1" fill="#0000e0"/><rect x="4" y="8" width="4" height="1" fill="#000"/><rect x="8" y="8" width="2" height="1" fill="#fff"/><rect x="10" y="8" width="1" height="1" fill="#000"/><rect x="11" y="8" width="1" height="1" fill="#fff"/><rect x="12" y="8" width="1" height="1" fill="#000"/><rect x="13" y="8" width="2" height="1" fill="#0000e0"/><rect x="0" y="9" width="1" height="1" fill="#c0c0c0"/><rect x="1" y="9" width="4" height="1" fill="#fff"/><rect x="5" y="9" width="2" height="1" fill="#000"/><rect x="7" y="9" width="3" height="1" fill="#fff"/><rect x="10" y="9" width="1" height="1" fill="#000"/><rect x="11" y="9" width="1" height="1" fill="#fff"/><rect x="12" y="9" width="1" height="1" fill="#000"/><rect x="13" y="9" width="2" height="1" fill="#0000e0"/><rect x="1" y="10" width="3" height="1" fill="#fff"/><rect x="4" y="10" width="4" height="1" fill="#0000e0"/><rect x="8" y="10" width="2" height="1" fill="#fff"/><rect x="10" y="10" width="5" height="1" fill="#0000e0"/><rect x="1" y="11" width="4" height="1" fill="#000"/><rect x="5" y="11" width="7" height="1" fill="#0000e0"/><rect x="12" y="11" width="2" height="1" fill="#000080"/><rect x="14" y="11" width="1" height="1" fill="#000"/><rect x="0" y="12" width="1" height="1" fill="#c0c0c0"/><rect x="1" y="12" width="4" height="1" fill="#fff"/><rect x="5" y="12" width="6" height="1" fill="#000080"/><rect x="11" y="12" width="2" height="1" fill="#fff"/><rect x="13" y="12" width="1" height="1" fill="#c0c0c0"/><rect x="14" y="12" width="1" height="1" fill="#000"/><rect x="0" y="13" width="1" height="1" fill="#c0c0c0"/><rect x="1" y="13" width="7" height="1" fill="#fff"/><rect x="8" y="13" width="5" height="1" fill="#c0c0c0"/><rect x="13" y="13" width="2" height="1" fill="#000"/><rect x="0" y="14" width="2" height="1" fill="#c0c0c0"/><rect x="2" y="14" width="11" height="1" fill="#a0a0a0"/><rect x="13" y="14" width="1" height="1" fill="#000"/><rect x="1" y="15" width="13" height="1" fill="#000"/></svg>
<span style="left:72.90px;top:211.14px;font-size:12px;line-height:14px;color:#000;transform:scaleX(0.8461);transform-origin:0 0;">Informant</span>
<div style="left:61px;top:234px;width:10px;height:1px;background:repeating-linear-gradient(90deg,#808080 0 1px,transparent 1px 2px);"></div>
<svg style="left:71px;top:226px" width="16" height="16" viewBox="0 0 16 16" shape-rendering="crispEdges"><rect x="8" y="0" width="7" height="1" fill="#000"/><rect x="3" y="1" width="3" height="1" fill="#707070"/><rect x="7" y="1" width="9" height="1" fill="#000"/><rect x="2" y="2" width="1" height="1" fill="#707070"/><rect x="3" y="2" width="3" height="1" fill="#fff"/><rect x="6" y="2" width="10" height="1" fill="#000"/><rect x="1" y="3" width="1" height="1" fill="#707070"/><rect x="2" y="3" width="2" height="1" fill="#fff"/><rect x="4" y="3" width="8" height="1" fill="#000"/><rect x="12" y="3" width="3" height="1" fill="#fff"/><rect x="15" y="3" width="1" height="1" fill="#000"/><rect x="1" y="4" width="1" height="1" fill="#707070"/><rect x="2" y="4" width="2" height="1" fill="#fff"/><rect x="4" y="4" width="7" height="1" fill="#000"/><rect x="11" y="4" width="4" height="1" fill="#fff"/><rect x="15" y="4" width="1" height="1" fill="#000"/><rect x="1" y="5" width="1" height="1" fill="#707070"/><rect x="2" y="5" width="2" height="1" fill="#fff"/><rect x="4" y="5" width="6" height="1" fill="#000"/><rect x="10" y="5" width="3" height="1" fill="#fff"/><rect x="13" y="5" width="1" height="1" fill="#0000e0"/><rect x="14" y="5" width="1" height="1" fill="#fff"/><rect x="15" y="5" width="1" height="1" fill="#000"/><rect x="1" y="6" width="1" height="1" fill="#707070"/><rect x="2" y="6" width="2" height="1" fill="#fff"/><rect x="4" y="6" width="6" height="1" fill="#000"/><rect x="10" y="6" width="5" height="1" fill="#fff"/><rect x="15" y="6" width="1" height="1" fill="#000"/><rect x="1" y="7" width="1" height="1" fill="#707070"/><rect x="2" y="7" width="2" height="1" fill="#fff"/><rect x="4" y="7" width="6" height="1" fill="#000"/><rect x="10" y="7" width="4" height="1" fill="#fff"/><rect x="14" y="7" width="1" height="1" fill="#000"/><rect x="1" y="8" width="1" height="1" fill="#707070"/><rect x="2" y="8" width="1" height="1" fill="#fff"/><rect x="3" y="8" width="8" height="1" fill="#000"/><rect x="11" y="8" width="3" height="1" fill="#fff"/><rect x="14" y="8" width="1" height="1" fill="#000"/><rect x="1" y="9" width="1" height="1" fill="#707070"/><rect x="2" y="9" width="4" height="1" fill="#fff"/><rect x="6" y="9" width="3" height="1" fill="#000"/><rect x="9" y="9" width="2" height="1" fill="#fff"/><rect x="11" y="9" width="1" height="1" fill="#000"/><rect x="12" y="9" width="2" height="1" fill="#fff"/><rect x="14" y="9" width="1" height="1" fill="#000"/><rect x="1" y="10" width="7" height="1" fill="#000"/><rect x="8" y="10" width="4" height="1" fill="#fff"/><rect x="12" y="10" width="3" height="1" fill="#0000e0"/><rect x="0" y="11" width="1" height="1" fill="#000"/><rect x="1" y="11" width="4" height="1" fill="#fff"/><rect x="5" y="11" width="4" height="1" fill="#0000e0"/><rect x="9" y="11" width="2" height="1" fill="#fff"/><rect x="11" y="11" width="5" height="1" fill="#0000e0"/><rect x="0" y="12" width="1" height="1" fill="#000"/><rect x="1" y="12" width="4" height="1" fill="#fff"/><rect x="5" y="12" width="10" height="1" fill="#000080"/><rect x="0" y="13" width="1" height="1" fill="#000"/><rect x="1" y="13" width="2" height="1" fill="#fff"/><rect x="3" y="13" width="2" height="1" fill="#00c000"/><rect x="5" y="13" width="8" height="1" fill="#c0c0c0"/><rect x="13" y="13" width="2" height="1" fill="#000"/><rect x="0" y="14" width="1" height="1" fill="#000"/><rect x="1" y="14" width="12" height="1" fill="#c0c0c0"/><rect x="13" y="14" width="1" height="1" fill="#000"/><rect x="1" y="15" width="13" height="1" fill="#000"/></svg>
<span style="left:91.60px;top:227.14px;font-size:12px;line-height:14px;color:#000;transform:scaleX(0.8902);transform-origin:0 0;">Huber</span>
<div style="left:46px;top:250px;width:6px;height:1px;background:repeating-linear-gradient(90deg,#808080 0 1px,transparent 1px 2px);"></div>
<div style="left:37px;top:246px;width:7px;height:7px;border:1px solid #919191;border-radius:1px;background:linear-gradient(135deg,#fff,#d8d8d8);"></div>
<div style="left:39px;top:250px;width:5px;height:1px;background:#2b3f8c;"></div>
<svg style="left:52px;top:242px" width="16" height="16" viewBox="0 0 16 16" shape-rendering="crispEdges"><rect x="9" y="0" width="6" height="1" fill="#000"/><rect x="2" y="1" width="4" height="1" fill="#707070"/><rect x="6" y="1" width="10" height="1" fill="#000"/><rect x="1" y="2" width="1" height="1" fill="#707070"/><rect x="2" y="2" width="3" height="1" fill="#fff"/><rect x="5" y="2" width="8" height="1" fill="#000"/><rect x="13" y="2" width="1" height="1" fill="#fff"/><rect x="14" y="2" width="2" height="1" fill="#000"/><rect x="0" y="3" width="1" height="1" fill="#c0c0c0"/><rect x="1" y="3" width="1" height="1" fill="#fff"/><rect x="2" y="3" width="2" height="1" fill="#000080"/><rect x="4" y="3" width="1" height="1" fill="#fff"/><rect x="5" y="3" width="8" height="1" fill="#000"/><rect x="13" y="3" width="1" height="1" fill="#fff"/><rect x="14" y="3" width="2" height="1" fill="#000"/><rect x="0" y="4" width="1" height="1" fill="#c0c0c0"/><rect x="1" y="4" width="1" height="1" fill="#fff"/><rect x="2" y="4" width="2" height="1" fill="#0000e0"/><rect x="4" y="4" width="6" height="1" fill="#000"/><rect x="10" y="4" width="1" height="1" fill="#fff"/><rect x="11" y="4" width="1" height="1" fill="#000"/><rect x="12" y="4" width="1" height="1" fill="#fff"/><rect x="13" y="4" width="1" height="1" fill="#0000e0"/><rect x="14" y="4" width="1" height="1" fill="#000"/><rect x="0" y="5" width="1" height="1" fill="#c0c0c0"/><rect x="1" y="5" width="1" height="1" fill="#fff"/><rect x="2" y="5" width="2" height="1" fill="#0000e0"/><rect x="4" y="5" width="4" height="1" fill="#000"/><rect x="8" y="5" width="2" height="1" fill="#fff"/><rect x="10" y="5" width="1" height="1" fill="#0000e0"/><rect x="11" y="5" width="1" height="1" fill="#000"/><rect x="12" y="5" width="1" height="1" fill="#fff"/><rect x="13" y="5" width="2" height="1" fill="#000"/><rect x="0" y="6" width="1" height="1" fill="#c0c0c0"/><rect x="1" y="6" width="1" height="1" fill="#fff"/><rect x="2" y="6" width="2" height="1" fill="#0000e0"/><rect x="4" y="6" width="3" height="1" fill="#000"/><rect x="7" y="6" width="4" height="1" fill="#fff"/><rect x="11" y="6" width="1" height="1" fill="#000"/><rect x="12" y="6" width="1" height="1" fill="#fff"/><rect x="13" y="6" width="2" height="1" fill="#000"/><rect x="0" y="7" width="1" height="1" fill="#c0c0c0"/><rect x="1" y="7" width="1" height="1" fill="#fff"/><rect x="2" y="7" width="2" height="1" fill="#0000e0"/><rect x="4" y="7" width="3" height="1" fill="#000"/><rect x="7" y="7" width="3" height="1" fill="#fff"/><rect x="10" y="7" width="1" height="1" fill="#000"/><rect x="11" y="7" width="2" height="1" fill="#fff"/><rect x="13" y="7" width="1" height="1" fill="#000"/><rect x="0" y="8" width="1" height="1" fill="#c0c0c0"/><rect x="1" y="8" width="1" height="1" fill="#fff"/><rect x="2" y="8" width="2" height="1" fill="#0000e0"/><rect x="4" y="8" width="4" height="1" fill="#000"/><rect x="8" y="8" width="2" height="1" fill="#fff"/><rect x="10" y="8" width="1" height="1" fill="#000"/><rect x="11" y="8" width="1" height="1" fill="#fff"/><rect x="12" y="8" width="1" height="1" fill="#000"/><rect x="13" y="8" width="2" height="1" fill="#0000e0"/><rect x="0" y="9" width="1" height="1" fill="#c0c0c0"/><rect x="1" y="9" width="4" height="1" fill="#fff"/><rect x="5" y="9" width="2" height="1" fill="#000"/><rect x="7" y="9" width="3" height="1" fill="#fff"/><rect x="10" y="9" width="1" height="1" fill="#000"/><rect x="11" y="9" width="1" height="1" fill="#fff"/><rect x="12" y="9" width="1" height="1" fill="#000"/><rect x="13" y="9" width="2" height="1" fill="#0000e0"/><rect x="1" y="10" width="3" height="1" fill="#fff"/><rect x="4" y="10" width="4" height="1" fill="#0000e0"/><rect x="8" y="10" width="2" height="1" fill="#fff"/><rect x="10" y="10" width="5" height="1" fill="#0000e0"/><rect x="1" y="11" width="4" height="1" fill="#000"/><rect x="5" y="11" width="7" height="1" fill="#0000e0"/><rect x="12" y="11" width="2" height="1" fill="#000080"/><rect x="14" y="11" width="1" height="1" fill="#000"/><rect x="0" y="12" width="1" height="1" fill="#c0c0c0"/><rect x="1" y="12" width="4" height="1" fill="#fff"/><rect x="5" y="12" width="6" height="1" fill="#000080"/><rect x="11" y="12" width="2" height="1" fill="#fff"/><rect x="13" y="12" width="1" height="1" fill="#c0c0c0"/><rect x="14" y="12" width="1" height="1" fill="#000"/><rect x="0" y="13" width="1" height="1" fill="#c0c0c0"/><rect x="1" y="13" width="7" height="1" fill="#fff"/><rect x="8" y="13" width="5" height="1" fill="#c0c0c0"/><rect x="13" y="13" width="2" height="1" fill="#000"/><rect x="0" y="14" width="2" height="1" fill="#c0c0c0"/><rect x="2" y="14" width="11" height="1" fill="#a0a0a0"/><rect x="13" y="14" width="1" height="1" fill="#000"/><rect x="1" y="15" width="13" height="1" fill="#000"/></svg>
<span style="left:72.90px;top:243.14px;font-size:12px;line-height:14px;color:#000;transform:scaleX(0.8223);transform-origin:0 0;">Profi</span>
<div style="left:61px;top:266px;width:10px;height:1px;background:repeating-linear-gradient(90deg,#808080 0 1px,transparent 1px 2px);"></div>
<div style="left:90px;top:258px;width:32px;height:16px;background:#f0f0f0;"></div>
<svg style="left:71px;top:258px" width="16" height="16" viewBox="0 0 16 16" shape-rendering="crispEdges"><rect x="8" y="0" width="7" height="1" fill="#000"/><rect x="3" y="1" width="3" height="1" fill="#707070"/><rect x="7" y="1" width="9" height="1" fill="#000"/><rect x="2" y="2" width="1" height="1" fill="#707070"/><rect x="3" y="2" width="3" height="1" fill="#fff"/><rect x="6" y="2" width="10" height="1" fill="#000"/><rect x="1" y="3" width="1" height="1" fill="#707070"/><rect x="2" y="3" width="2" height="1" fill="#fff"/><rect x="4" y="3" width="8" height="1" fill="#000"/><rect x="12" y="3" width="3" height="1" fill="#fff"/><rect x="15" y="3" width="1" height="1" fill="#000"/><rect x="1" y="4" width="1" height="1" fill="#707070"/><rect x="2" y="4" width="2" height="1" fill="#fff"/><rect x="4" y="4" width="7" height="1" fill="#000"/><rect x="11" y="4" width="4" height="1" fill="#fff"/><rect x="15" y="4" width="1" height="1" fill="#000"/><rect x="1" y="5" width="1" height="1" fill="#707070"/><rect x="2" y="5" width="2" height="1" fill="#fff"/><rect x="4" y="5" width="6" height="1" fill="#000"/><rect x="10" y="5" width="3" height="1" fill="#fff"/><rect x="13" y="5" width="1" height="1" fill="#0000e0"/><rect x="14" y="5" width="1" height="1" fill="#fff"/><rect x="15" y="5" width="1" height="1" fill="#000"/><rect x="1" y="6" width="1" height="1" fill="#707070"/><rect x="2" y="6" width="2" height="1" fill="#fff"/><rect x="4" y="6" width="6" height="1" fill="#000"/><rect x="10" y="6" width="5" height="1" fill="#fff"/><rect x="15" y="6" width="1" height="1" fill="#000"/><rect x="1" y="7" width="1" height="1" fill="#707070"/><rect x="2" y="7" width="2" height="1" fill="#fff"/><rect x="4" y="7" width="6" height="1" fill="#000"/><rect x="10" y="7" width="4" height="1" fill="#fff"/><rect x="14" y="7" width="1" height="1" fill="#000"/><rect x="1" y="8" width="1" height="1" fill="#707070"/><rect x="2" y="8" width="1" height="1" fill="#fff"/><rect x="3" y="8" width="8" height="1" fill="#000"/><rect x="11" y="8" width="3" height="1" fill="#fff"/><rect x="14" y="8" width="1" height="1" fill="#000"/><rect x="1" y="9" width="1" height="1" fill="#707070"/><rect x="2" y="9" width="4" height="1" fill="#fff"/><rect x="6" y="9" width="3" height="1" fill="#000"/><rect x="9" y="9" width="2" height="1" fill="#fff"/><rect x="11" y="9" width="1" height="1" fill="#000"/><rect x="12" y="9" width="2" height="1" fill="#fff"/><rect x="14" y="9" width="1" height="1" fill="#000"/><rect x="1" y="10" width="7" height="1" fill="#000"/><rect x="8" y="10" width="4" height="1" fill="#fff"/><rect x="12" y="10" width="3" height="1" fill="#0000e0"/><rect x="0" y="11" width="1" height="1" fill="#000"/><rect x="1" y="11" width="4" height="1" fill="#fff"/><rect x="5" y="11" width="4" height="1" fill="#0000e0"/><rect x="9" y="11" width="2" height="1" fill="#fff"/><rect x="11" y="11" width="5" height="1" fill="#0000e0"/><rect x="0" y="12" width="1" height="1" fill="#000"/><rect x="1" y="12" width="4" height="1" fill="#fff"/><rect x="5" y="12" width="10" height="1" fill="#000080"/><rect x="0" y="13" width="1" height="1" fill="#000"/><rect x="1" y="13" width="2" height="1" fill="#fff"/><rect x="3" y="13" width="2" height="1" fill="#00c000"/><rect x="5" y="13" width="8" height="1" fill="#c0c0c0"/><rect x="13" y="13" width="2" height="1" fill="#000"/><rect x="0" y="14" width="1" height="1" fill="#000"/><rect x="1" y="14" width="12" height="1" fill="#c0c0c0"/><rect x="13" y="14" width="1" height="1" fill="#000"/><rect x="1" y="15" width="13" height="1" fill="#000"/></svg>
<span style="left:91.60px;top:259.14px;font-size:12px;line-height:14px;color:#000;transform:scaleX(0.8662);transform-origin:0 0;">Müller</span>
<span style="left:11.50px;top:424.04px;font-size:12px;line-height:14px;color:#000;font-weight:bold;transform:scaleX(0.8964);transform-origin:0 0;">Konfigurationsbereiche :</span>
<div style="left:9px;top:448px;width:230px;height:196px;background:#fff;border:1px solid #828790;"></div>
<div style="left:23px;top:450px;width:1px;height:184px;background:repeating-linear-gradient(180deg,#808080 0 1px,transparent 1px 2px);"></div>
<div style="left:42px;top:450px;width:1px;height:136px;background:repeating-linear-gradient(180deg,#808080 0 1px,transparent 1px 2px);"></div>
<div style="left:61px;top:450px;width:1px;height:72px;background:repeating-linear-gradient(180deg,#808080 0 1px,transparent 1px 2px);"></div>
<div style="left:61px;top:546px;width:1px;height:16px;background:repeating-linear-gradient(180deg,#808080 0 1px,transparent 1px 2px);"></div>
<div style="left:62px;top:458px;width:8px;height:1px;background:repeating-linear-gradient(90deg,#808080 0 1px,transparent 1px 2px);"></div>
<span style="left:73.00px;top:450.64px;font-size:12px;line-height:14px;color:#000;transform:scaleX(0.8851);transform-origin:0 0;">Datenbankexport</span>
<div style="left:62px;top:474px;width:8px;height:1px;background:repeating-linear-gradient(90deg,#808080 0 1px,transparent 1px 2px);"></div>
<span style="left:73.00px;top:466.64px;font-size:12px;line-height:14px;color:#000;transform:scaleX(0.8767);transform-origin:0 0;">Massenänderung</span>
<div style="left:62px;top:490px;width:8px;height:1px;background:repeating-linear-gradient(90deg,#808080 0 1px,transparent 1px 2px);"></div>
<span style="left:73.00px;top:482.64px;font-size:12px;line-height:14px;color:#000;transform:scaleX(0.8442);transform-origin:0 0;">Mini-GIS</span>
<div style="left:67px;top:506px;width:4px;height:1px;background:repeating-linear-gradient(90deg,#808080 0 1px,transparent 1px 2px);"></div>
<div style="left:57px;top:502px;width:7px;height:7px;border:1px solid #919191;border-radius:1px;background:linear-gradient(135deg,#fff,#d8d8d8);"></div>
<div style="left:59px;top:506px;width:5px;height:1px;background:#2b3f8c;"></div>
<div style="left:61px;top:504px;width:1px;height:5px;background:#2b3f8c;"></div>
<span style="left:73.00px;top:498.64px;font-size:12px;line-height:14px;color:#000;transform:scaleX(0.8673);transform-origin:0 0;">Schnittstellen</span>
<div style="left:62px;top:522px;width:8px;height:1px;background:repeating-linear-gradient(90deg,#808080 0 1px,transparent 1px 2px);"></div>
<span style="left:73.00px;top:514.64px;font-size:12px;line-height:14px;color:#000;transform:scaleX(0.8832);transform-origin:0 0;">SQL Interface</span>
<div style="left:48px;top:538px;width:4px;height:1px;background:repeating-linear-gradient(90deg,#808080 0 1px,transparent 1px 2px);"></div>
<div style="left:38px;top:534px;width:7px;height:7px;border:1px solid #919191;border-radius:1px;background:linear-gradient(135deg,#fff,#d8d8d8);"></div>
<div style="left:40px;top:538px;width:5px;height:1px;background:#2b3f8c;"></div>
<div style="left:52px;top:530px;width:50px;height:16px;background:#0078d7;"></div>
<span style="left:54.30px;top:530.64px;font-size:12px;line-height:14px;color:#fff;transform:scaleX(0.8137);transform-origin:0 0;">Formulare</span>
<div style="left:62px;top:554px;width:8px;height:1px;background:repeating-linear-gradient(90deg,#808080 0 1px,transparent 1px 2px);"></div>
<span style="left:73.00px;top:546.64px;font-size:12px;line-height:14px;color:#000;transform:scaleX(0.8682);transform-origin:0 0;">Designer</span>
<div style="left:43px;top:570px;width:8px;height:1px;background:repeating-linear-gradient(90deg,#808080 0 1px,transparent 1px 2px);"></div>
<span style="left:54.30px;top:562.64px;font-size:12px;line-height:14px;color:#000;transform:scaleX(0.8571);transform-origin:0 0;">luxData.Control</span>
<div style="left:43px;top:586px;width:8px;height:1px;background:repeating-linear-gradient(90deg,#808080 0 1px,transparent 1px 2px);"></div>
<span style="left:54.30px;top:578.64px;font-size:12px;line-height:14px;color:#000;transform:scaleX(0.8479);transform-origin:0 0;">Vorfilter</span>
<div style="left:29px;top:602px;width:4px;height:1px;background:repeating-linear-gradient(90deg,#808080 0 1px,transparent 1px 2px);"></div>
<div style="left:19px;top:598px;width:7px;height:7px;border:1px solid #919191;border-radius:1px;background:linear-gradient(135deg,#fff,#d8d8d8);"></div>
<div style="left:21px;top:602px;width:5px;height:1px;background:#2b3f8c;"></div>
<div style="left:23px;top:600px;width:1px;height:5px;background:#2b3f8c;"></div>
<span style="left:34.40px;top:594.64px;font-size:12px;line-height:14px;color:#000;transform:scaleX(0.8659);transform-origin:0 0;">GIS</span>
<div style="left:29px;top:618px;width:4px;height:1px;background:repeating-linear-gradient(90deg,#808080 0 1px,transparent 1px 2px);"></div>
<div style="left:19px;top:614px;width:7px;height:7px;border:1px solid #919191;border-radius:1px;background:linear-gradient(135deg,#fff,#d8d8d8);"></div>
<div style="left:21px;top:618px;width:5px;height:1px;background:#2b3f8c;"></div>
<div style="left:23px;top:616px;width:1px;height:5px;background:#2b3f8c;"></div>
<span style="left:34.40px;top:610.64px;font-size:12px;line-height:14px;color:#000;transform:scaleX(0.8872);transform-origin:0 0;">luxData.web</span>
<div style="left:29px;top:634px;width:4px;height:1px;background:repeating-linear-gradient(90deg,#808080 0 1px,transparent 1px 2px);"></div>
<div style="left:19px;top:630px;width:7px;height:7px;border:1px solid #919191;border-radius:1px;background:linear-gradient(135deg,#fff,#d8d8d8);"></div>
<div style="left:21px;top:634px;width:5px;height:1px;background:#2b3f8c;"></div>
<div style="left:23px;top:632px;width:1px;height:5px;background:#2b3f8c;"></div>
<span style="left:34.40px;top:626.64px;font-size:12px;line-height:14px;color:#000;transform:scaleX(0.8791);transform-origin:0 0;">Offline</span>
<div style="left:223px;top:450px;width:16px;height:194px;background:#f0f0f0;"></div>
<div style="left:223px;top:531px;width:15px;height:96px;background:#cdcdcd;"></div>
<svg style="left:224.2px;top:453px" width="12" height="12" viewBox="-6 -6 12 12"><path d="M-3 2 L0 -1.4 L3 2" fill="none" stroke="#585858" stroke-width="2.3"/></svg>
<svg style="left:224.2px;top:629.3px" width="12" height="12" viewBox="-6 -6 12 12"><path d="M-3 -2 L0 1.4 L3 -2" fill="none" stroke="#585858" stroke-width="2.3"/></svg>
<div style="left:241px;top:32px;width:8px;height:612px;background:#f0f0f0;border:1px solid;border-color:#a0a0a0 #fff #fff #a0a0a0;box-shadow:inset 1px 1px 0 #696969, inset -1px -1px 0 #e3e3e3;"></div>
<span style="left:342.70px;top:41.69px;font-size:11px;line-height:13px;color:#000;font-weight:bold;letter-spacing:0.216px;">ID :</span>
<span style="left:300.60px;top:64.09px;font-size:11px;line-height:13px;color:#000;font-weight:bold;letter-spacing:0.198px;word-spacing:-1.2px;">Username :</span>
<span style="left:305.40px;top:86.99px;font-size:11px;line-height:13px;color:#000;font-weight:bold;letter-spacing:0.146px;word-spacing:-1.2px;">Passwort :</span>
<span style="left:322.60px;top:109.69px;font-size:11px;line-height:13px;color:#000;font-weight:bold;letter-spacing:0.109px;">E-Mail :</span>
<span style="left:282.60px;top:133.49px;font-size:11px;line-height:13px;color:#000;font-weight:bold;letter-spacing:-0.020px;word-spacing:-1.2px;">Beschreibung :</span>
<div style="left:371px;top:36px;width:46px;height:18px;background:#f0f0f0;box-shadow:inset 0 0 0 1px #fff;border:1px solid #7a7a7a;"></div>
<span style="left:374.00px;top:40.09px;font-size:11px;line-height:13px;color:#000;letter-spacing:0.375px;">47</span>
<span style="left:440.60px;top:41.09px;font-size:11px;line-height:13px;color:#000;font-weight:bold;letter-spacing:0.407px;word-spacing:-1.2px;">Typ :</span>
<span style="left:477.60px;top:41.09px;font-size:11px;line-height:13px;color:#0000ff;font-weight:bold;letter-spacing:0.117px;">Benutzer</span>
<div style="left:371px;top:59px;width:167px;height:18px;background:#fff;border:1px solid #7a7a7a;"></div>
<span style="left:374.00px;top:62.69px;font-size:11px;line-height:13px;color:#000;letter-spacing:-0.326px;">Müller</span>
<div style="left:371px;top:82px;width:167px;height:18px;background:#fff;border:1px solid #7a7a7a;"></div>
<span style="left:374.00px;top:84.58px;font-size:9px;line-height:11px;color:#000;font-weight:bold;letter-spacing:0.338px;">*************************</span>
<div style="left:371px;top:105px;width:167px;height:18px;background:#fff;border:1px solid #7a7a7a;"></div>
<div style="left:371px;top:128px;width:340px;height:58px;background:#fff;border:1px solid #7a7a7a;"></div>
<div style="left:695px;top:130px;width:16px;height:54px;background:#f0f0f0;"></div>
<svg style="left:697px;top:133.5px" width="12" height="12" viewBox="-6 -6 12 12"><path d="M-3 2 L0 -1.4 L3 2" fill="none" stroke="#b8b8b8" stroke-width="2.2"/></svg>
<svg style="left:697px;top:169px" width="12" height="12" viewBox="-6 -6 12 12"><path d="M-3 -2 L0 1.4 L3 -2" fill="none" stroke="#b8b8b8" stroke-width="2.2"/></svg>
<div style="left:565px;top:44px;width:11px;height:11px;background:#fff;border:1px solid #333;"></div>
<span style="left:582.50px;top:44.29px;font-size:11px;line-height:13px;color:#000;letter-spacing:0.027px;">User kann Passwort ändern</span>
<div style="left:565px;top:64px;width:11px;height:11px;background:#fff;border:1px solid #333;"></div>
<span style="left:582.50px;top:64.29px;font-size:11px;line-height:13px;color:#000;letter-spacing:0.020px;">User muss Passwort beim nächsten Anmelden ändern</span>
<span style="left:565.80px;top:85.19px;font-size:11px;line-height:13px;color:#000;letter-spacing:-0.015px;">Passwort läuft ab in</span>
<div style="left:664px;top:81px;width:28px;height:18px;background:#fff;border:1px solid #7a7a7a;"></div>
<span style="left:676.40px;top:85.09px;font-size:11px;line-height:13px;color:#000;letter-spacing:-0.125px;">0</span>
<span style="left:703.00px;top:84.09px;font-size:11px;line-height:13px;color:#000;letter-spacing:0.015px;">Tag(en)</span>
<span style="left:756.30px;top:84.09px;font-size:11px;line-height:13px;color:#000;letter-spacing:-0.020px;">(0=läuft nie</span>
<div style="left:703px;top:98px;width:40px;height:4px;overflow:hidden;"><span style="position:absolute;left:0;top:0;font:11px/13px 'Liberation Sans', sans-serif;white-space:nowrap;">ab.)</span></div>
<div style="left:729px;top:129px;width:93px;height:19px;background:#cccccc;border:1px solid #bfbfbf;"></div>
<span style="left:752.30px;top:132.89px;font-size:11px;line-height:13px;color:#a0a0a0;letter-spacing:0.106px;text-shadow:1px 1px 0 #fff;">Speichern</span>
<div style="left:729px;top:155px;width:93px;height:19px;background:#cccccc;border:1px solid #bfbfbf;"></div>
<span style="left:747.60px;top:159.49px;font-size:11px;line-height:13px;color:#a0a0a0;letter-spacing:0.111px;text-shadow:1px 1px 0 #fff;">Rückgängig</span>
<div style="left:251px;top:184px;width:670px;height:460px;background:#f0f0f0;border:1px solid;border-color:#a0a0a0 #fff #fff #a0a0a0;box-shadow:inset 1px 1px 0 #696969, inset -1px -1px 0 #e3e3e3;"></div>
<span style="left:429.50px;top:195.79px;font-size:11px;line-height:13px;color:#000;font-weight:bold;letter-spacing:0.203px;">Konfigurationseinstellungen</span>
<span style="left:587.80px;top:195.79px;font-size:11px;line-height:13px;color:#000;font-weight:bold;letter-spacing:-0.391px;">für</span>
<span style="left:603.50px;top:195.79px;font-size:11px;line-height:13px;color:#000;font-weight:bold;letter-spacing:-0.393px;">diesen</span>
<span style="left:639.00px;top:195.79px;font-size:11px;line-height:13px;color:#000;font-weight:bold;letter-spacing:-0.467px;">User</span>
<span style="left:666.20px;top:195.79px;font-size:11px;line-height:13px;color:#000;font-weight:bold;letter-spacing:1.237px;">/</span>
<span style="left:673.00px;top:195.79px;font-size:11px;line-height:13px;color:#000;font-weight:bold;letter-spacing:-0.448px;">diese</span>
<span style="left:701.10px;top:195.79px;font-size:11px;line-height:13px;color:#000;font-weight:bold;letter-spacing:-0.304px;">Gruppe</span>
<span style="left:741.30px;top:195.79px;font-size:11px;line-height:13px;color:#000;font-weight:bold;letter-spacing:0.228px;">:</span>
<span style="left:255.40px;top:219.29px;font-size:11px;line-height:13px;color:#000;font-weight:bold;letter-spacing:0.200px;">Formulare</span>
<div style="left:254px;top:238px;width:666px;height:381px;background:#fff;"></div>
<div style="left:254px;top:238px;width:666px;height:1px;background:#696969;"></div>
<div style="left:254px;top:238px;width:1px;height:380px;background:#696969;"></div>
<div style="left:253px;top:238px;width:1px;height:381px;background:#a0a0a0;"></div>
<div style="left:919px;top:239px;width:1px;height:380px;background:#e3e3e3;"></div>
<div style="left:920px;top:238px;width:1px;height:382px;background:#fff;"></div>
<div style="left:255px;top:239px;width:648px;height:18px;background:#f0f0f0;"></div>
<div style="left:255px;top:257px;width:648px;height:1px;background:#a0a0a0;"></div>
<div style="left:255px;top:239px;width:648px;height:1px;background:#fff;"></div>
<div style="left:255px;top:239px;width:1px;height:18px;background:#fff;"></div>
<div style="left:624px;top:241px;width:1px;height:15px;background:#a0a0a0;"></div>
<div style="left:654px;top:241px;width:1px;height:15px;background:#a0a0a0;"></div>
<div style="left:703px;top:241px;width:1px;height:15px;background:#a0a0a0;"></div>
<div style="left:760px;top:241px;width:1px;height:15px;background:#a0a0a0;"></div>
<div style="left:811px;top:241px;width:1px;height:15px;background:#a0a0a0;"></div>
<div style="left:869px;top:241px;width:1px;height:15px;background:#a0a0a0;"></div>
<span style="left:259.00px;top:241.99px;font-size:11px;line-height:13px;color:#000;letter-spacing:0.073px;">Formular / Bereich</span>
<span style="left:659.00px;top:241.99px;font-size:11px;line-height:13px;color:#000;letter-spacing:-0.021px;">Öffnen</span>
<span style="left:708.00px;top:241.99px;font-size:11px;line-height:13px;color:#000;letter-spacing:-0.141px;">Anfügen</span>
<span style="left:765.10px;top:241.99px;font-size:11px;line-height:13px;color:#000;letter-spacing:-0.097px;">Ändern</span>
<span style="left:816.40px;top:241.99px;font-size:11px;line-height:13px;color:#000;letter-spacing:-0.085px;">Löschen</span>
<div style="left:870px;top:239px;width:33px;height:18px;overflow:hidden;">
<span style="left:4.40px;top:2.99px;font-size:11px;line-height:13px;color:#000;letter-spacing:0.120px;">Massenänderung</span>
</div>
<div style="left:255px;top:258px;width:369px;height:344px;background:#ffffe1;"></div>
<div style="left:625px;top:258px;width:29px;height:344px;background:#f5f5dc;"></div>
<div style="left:655px;top:258px;width:48px;height:344px;background:#f5f5dc;"></div>
<div style="left:624px;top:258px;width:1px;height:344px;background:#fdfdf4;"></div>
<div style="left:654px;top:258px;width:1px;height:344px;background:#fdfdf4;"></div>
<div style="left:255px;top:274px;width:448px;height:1px;background:#fcfcf2;"></div>
<div style="left:255px;top:291px;width:448px;height:1px;background:#fcfcf2;"></div>
<div style="left:255px;top:308px;width:448px;height:1px;background:#fcfcf2;"></div>
<div style="left:255px;top:325px;width:448px;height:1px;background:#fcfcf2;"></div>
<div style="left:255px;top:342px;width:448px;height:1px;background:#fcfcf2;"></div>
<div style="left:255px;top:359px;width:448px;height:1px;background:#fcfcf2;"></div>
<div style="left:255px;top:376px;width:448px;height:1px;background:#fcfcf2;"></div>
<div style="left:255px;top:393px;width:448px;height:1px;background:#fcfcf2;"></div>
<div style="left:255px;top:410px;width:448px;height:1px;background:#fcfcf2;"></div>
<div style="left:255px;top:427px;width:448px;height:1px;background:#fcfcf2;"></div>
<div style="left:255px;top:444px;width:448px;height:1px;background:#fcfcf2;"></div>
<div style="left:255px;top:461px;width:448px;height:1px;background:#fcfcf2;"></div>
<div style="left:255px;top:478px;width:448px;height:1px;background:#fcfcf2;"></div>
<div style="left:255px;top:495px;width:448px;height:1px;background:#fcfcf2;"></div>
<div style="left:255px;top:512px;width:448px;height:1px;background:#fcfcf2;"></div>
<div style="left:255px;top:529px;width:448px;height:1px;background:#fcfcf2;"></div>
<div style="left:255px;top:546px;width:448px;height:1px;background:#fcfcf2;"></div>
<div style="left:255px;top:563px;width:448px;height:1px;background:#fcfcf2;"></div>
<div style="left:255px;top:580px;width:448px;height:1px;background:#fcfcf2;"></div>
<div style="left:255px;top:597px;width:448px;height:1px;background:#fcfcf2;"></div>
<span style="left:257.30px;top:260.59px;font-size:11px;line-height:13px;color:#000;letter-spacing:0.004px;">Anlagenbauteile Solo - Wartung exportieren</span>
<div style="left:629px;top:258px;width:18px;height:16px;overflow:hidden;"><div style="left:0;top:0;width:16px;height:14px;background:#f0f0f0;border:1px solid;border-color:#fff #696969 #696969 #fff;box-shadow:inset -1px -1px 0 #a0a0a0;"></div><div style="left:5px;top:10px;width:1px;height:1px;background:#7a1f8a;box-shadow:3px 0 0 #7a1f8a,6px 0 0 #7a1f8a;"></div></div>
<div style="left:672px;top:259px;width:13px;height:13px;overflow:hidden;"><div style="left:0;top:0;width:11px;height:11px;background:#fff;border:1px solid;border-color:#a0a0a0 #fff #fff #a0a0a0;box-shadow:inset 1px 1px 0 #696969, inset -1px -1px 0 #e3e3e3;"></div><svg style="left:4px;top:3px" width="7" height="7" viewBox="0 0 7 7" shape-rendering="crispEdges"><path d="M0 2h1v3h-1zM1 3h1v3h-1zM2 4h1v3h-1zM3 3h1v3h-1zM4 2h1v3h-1zM5 1h1v3h-1zM6 0h1v3h-1z" fill="#000"/></svg></div>
<span style="left:257.30px;top:277.59px;font-size:11px;line-height:13px;color:#000;letter-spacing:0.088px;">Ansicht - Design</span>
<div style="left:629px;top:275px;width:18px;height:16px;overflow:hidden;"><div style="left:0;top:0;width:16px;height:14px;background:#f0f0f0;border:1px solid;border-color:#fff #696969 #696969 #fff;box-shadow:inset -1px -1px 0 #a0a0a0;"></div><div style="left:5px;top:10px;width:1px;height:1px;background:#7a1f8a;box-shadow:3px 0 0 #7a1f8a,6px 0 0 #7a1f8a;"></div></div>
<div style="left:672px;top:276px;width:13px;height:13px;overflow:hidden;"><div style="left:0;top:0;width:11px;height:11px;background:#fff;border:1px solid;border-color:#a0a0a0 #fff #fff #a0a0a0;box-shadow:inset 1px 1px 0 #696969, inset -1px -1px 0 #e3e3e3;"></div><svg style="left:4px;top:3px" width="7" height="7" viewBox="0 0 7 7" shape-rendering="crispEdges"><path d="M0 2h1v3h-1zM1 3h1v3h-1zM2 4h1v3h-1zM3 3h1v3h-1zM4 2h1v3h-1zM5 1h1v3h-1zM6 0h1v3h-1z" fill="#000"/></svg></div>
<span style="left:257.30px;top:294.59px;font-size:11px;line-height:13px;color:#000;letter-spacing:0.001px;">Auswahl Gruppe oder Benutzer</span>
<div style="left:629px;top:292px;width:18px;height:16px;overflow:hidden;"><div style="left:0;top:0;width:16px;height:14px;background:#f0f0f0;border:1px solid;border-color:#fff #696969 #696969 #fff;box-shadow:inset -1px -1px 0 #a0a0a0;"></div><div style="left:5px;top:10px;width:1px;height:1px;background:#7a1f8a;box-shadow:3px 0 0 #7a1f8a,6px 0 0 #7a1f8a;"></div></div>
<div style="left:672px;top:293px;width:13px;height:13px;overflow:hidden;"><div style="left:0;top:0;width:11px;height:11px;background:#fff;border:1px solid;border-color:#a0a0a0 #fff #fff #a0a0a0;box-shadow:inset 1px 1px 0 #696969, inset -1px -1px 0 #e3e3e3;"></div><svg style="left:4px;top:3px" width="7" height="7" viewBox="0 0 7 7" shape-rendering="crispEdges"><path d="M0 2h1v3h-1zM1 3h1v3h-1zM2 4h1v3h-1zM3 3h1v3h-1zM4 2h1v3h-1zM5 1h1v3h-1zM6 0h1v3h-1z" fill="#000"/></svg></div>
<span style="left:257.30px;top:311.59px;font-size:11px;line-height:13px;color:#000;letter-spacing:0.096px;">Baumansicht (einzelnes Formular)</span>
<div style="left:629px;top:309px;width:18px;height:16px;overflow:hidden;"><div style="left:0;top:0;width:16px;height:14px;background:#f0f0f0;border:1px solid;border-color:#fff #696969 #696969 #fff;box-shadow:inset -1px -1px 0 #a0a0a0;"></div><div style="left:5px;top:10px;width:1px;height:1px;background:#7a1f8a;box-shadow:3px 0 0 #7a1f8a,6px 0 0 #7a1f8a;"></div></div>
<div style="left:672px;top:310px;width:13px;height:13px;overflow:hidden;"><div style="left:0;top:0;width:11px;height:11px;background:#fff;border:1px solid;border-color:#a0a0a0 #fff #fff #a0a0a0;box-shadow:inset 1px 1px 0 #696969, inset -1px -1px 0 #e3e3e3;"></div><svg style="left:4px;top:3px" width="7" height="7" viewBox="0 0 7 7" shape-rendering="crispEdges"><path d="M0 2h1v3h-1zM1 3h1v3h-1zM2 4h1v3h-1zM3 3h1v3h-1zM4 2h1v3h-1zM5 1h1v3h-1zM6 0h1v3h-1z" fill="#000"/></svg></div>
<span style="left:257.30px;top:328.59px;font-size:11px;line-height:13px;color:#000;letter-spacing:0.075px;">Datei - Berichtspool</span>
<div style="left:629px;top:326px;width:18px;height:16px;overflow:hidden;"><div style="left:0;top:0;width:16px;height:14px;background:#f0f0f0;border:1px solid;border-color:#fff #696969 #696969 #fff;box-shadow:inset -1px -1px 0 #a0a0a0;"></div><div style="left:5px;top:10px;width:1px;height:1px;background:#7a1f8a;box-shadow:3px 0 0 #7a1f8a,6px 0 0 #7a1f8a;"></div></div>
<div style="left:672px;top:327px;width:13px;height:13px;overflow:hidden;"><div style="left:0;top:0;width:11px;height:11px;background:#fff;border:1px solid;border-color:#a0a0a0 #fff #fff #a0a0a0;box-shadow:inset 1px 1px 0 #696969, inset -1px -1px 0 #e3e3e3;"></div><svg style="left:4px;top:3px" width="7" height="7" viewBox="0 0 7 7" shape-rendering="crispEdges"><path d="M0 2h1v3h-1zM1 3h1v3h-1zM2 4h1v3h-1zM3 3h1v3h-1zM4 2h1v3h-1zM5 1h1v3h-1zM6 0h1v3h-1z" fill="#000"/></svg></div>
<span style="left:257.30px;top:345.59px;font-size:11px;line-height:13px;color:#000;letter-spacing:0.026px;">Datei - Reportpool - Reportpool-Pflege</span>
<div style="left:629px;top:343px;width:18px;height:16px;overflow:hidden;"><div style="left:0;top:0;width:16px;height:14px;background:#f0f0f0;border:1px solid;border-color:#fff #696969 #696969 #fff;box-shadow:inset -1px -1px 0 #a0a0a0;"></div><div style="left:5px;top:10px;width:1px;height:1px;background:#7a1f8a;box-shadow:3px 0 0 #7a1f8a,6px 0 0 #7a1f8a;"></div></div>
<div style="left:672px;top:344px;width:13px;height:13px;overflow:hidden;"><div style="left:0;top:0;width:11px;height:11px;background:#fff;border:1px solid;border-color:#a0a0a0 #fff #fff #a0a0a0;box-shadow:inset 1px 1px 0 #696969, inset -1px -1px 0 #e3e3e3;"></div><svg style="left:4px;top:3px" width="7" height="7" viewBox="0 0 7 7" shape-rendering="crispEdges"><path d="M0 2h1v3h-1zM1 3h1v3h-1zM2 4h1v3h-1zM3 3h1v3h-1zM4 2h1v3h-1zM5 1h1v3h-1zM6 0h1v3h-1z" fill="#000"/></svg></div>
<span style="left:257.30px;top:362.59px;font-size:11px;line-height:13px;color:#000;letter-spacing:0.065px;">Datei - Reportpool - Vorschau</span>
<div style="left:629px;top:360px;width:18px;height:16px;overflow:hidden;"><div style="left:0;top:0;width:16px;height:14px;background:#f0f0f0;border:1px solid;border-color:#fff #696969 #696969 #fff;box-shadow:inset -1px -1px 0 #a0a0a0;"></div><div style="left:5px;top:10px;width:1px;height:1px;background:#7a1f8a;box-shadow:3px 0 0 #7a1f8a,6px 0 0 #7a1f8a;"></div></div>
<div style="left:672px;top:361px;width:13px;height:13px;overflow:hidden;"><div style="left:0;top:0;width:11px;height:11px;background:#fff;border:1px solid;border-color:#a0a0a0 #fff #fff #a0a0a0;box-shadow:inset 1px 1px 0 #696969, inset -1px -1px 0 #e3e3e3;"></div><svg style="left:4px;top:3px" width="7" height="7" viewBox="0 0 7 7" shape-rendering="crispEdges"><path d="M0 2h1v3h-1zM1 3h1v3h-1zM2 4h1v3h-1zM3 3h1v3h-1zM4 2h1v3h-1zM5 1h1v3h-1zM6 0h1v3h-1z" fill="#000"/></svg></div>
<span style="left:257.30px;top:379.59px;font-size:11px;line-height:13px;color:#000;letter-spacing:0.059px;">Datei - Reportpool - Vorschau - Optionen</span>
<div style="left:629px;top:377px;width:18px;height:16px;overflow:hidden;"><div style="left:0;top:0;width:16px;height:14px;background:#f0f0f0;border:1px solid;border-color:#fff #696969 #696969 #fff;box-shadow:inset -1px -1px 0 #a0a0a0;"></div><div style="left:5px;top:10px;width:1px;height:1px;background:#7a1f8a;box-shadow:3px 0 0 #7a1f8a,6px 0 0 #7a1f8a;"></div></div>
<div style="left:672px;top:378px;width:13px;height:13px;overflow:hidden;"><div style="left:0;top:0;width:11px;height:11px;background:#fff;border:1px solid;border-color:#a0a0a0 #fff #fff #a0a0a0;box-shadow:inset 1px 1px 0 #696969, inset -1px -1px 0 #e3e3e3;"></div><svg style="left:4px;top:3px" width="7" height="7" viewBox="0 0 7 7" shape-rendering="crispEdges"><path d="M0 2h1v3h-1zM1 3h1v3h-1zM2 4h1v3h-1zM3 3h1v3h-1zM4 2h1v3h-1zM5 1h1v3h-1zM6 0h1v3h-1z" fill="#000"/></svg></div>
<span style="left:257.30px;top:396.59px;font-size:11px;line-height:13px;color:#000;letter-spacing:0.026px;">Datei - Verwaltung - Add-Ins - Add-In Manager</span>
<div style="left:629px;top:394px;width:18px;height:16px;overflow:hidden;"><div style="left:0;top:0;width:16px;height:14px;background:#f0f0f0;border:1px solid;border-color:#fff #696969 #696969 #fff;box-shadow:inset -1px -1px 0 #a0a0a0;"></div><div style="left:5px;top:10px;width:1px;height:1px;background:#7a1f8a;box-shadow:3px 0 0 #7a1f8a,6px 0 0 #7a1f8a;"></div></div>
<div style="left:672px;top:395px;width:13px;height:13px;overflow:hidden;"><div style="left:0;top:0;width:11px;height:11px;background:#fff;border:1px solid;border-color:#a0a0a0 #fff #fff #a0a0a0;box-shadow:inset 1px 1px 0 #696969, inset -1px -1px 0 #e3e3e3;"></div><svg style="left:4px;top:3px" width="7" height="7" viewBox="0 0 7 7" shape-rendering="crispEdges"><path d="M0 2h1v3h-1zM1 3h1v3h-1zM2 4h1v3h-1zM3 3h1v3h-1zM4 2h1v3h-1zM5 1h1v3h-1zM6 0h1v3h-1z" fill="#000"/></svg></div>
<span style="left:257.30px;top:413.59px;font-size:11px;line-height:13px;color:#000;letter-spacing:0.025px;">Datei - Verwaltung - Benutzer</span>
<div style="left:629px;top:411px;width:18px;height:16px;overflow:hidden;"><div style="left:0;top:0;width:16px;height:14px;background:#f0f0f0;border:1px solid;border-color:#fff #696969 #696969 #fff;box-shadow:inset -1px -1px 0 #a0a0a0;"></div><div style="left:5px;top:10px;width:1px;height:1px;background:#7a1f8a;box-shadow:3px 0 0 #7a1f8a,6px 0 0 #7a1f8a;"></div></div>
<div style="left:672px;top:412px;width:13px;height:13px;overflow:hidden;"><div style="left:0;top:0;width:11px;height:11px;background:#fff;border:1px solid;border-color:#a0a0a0 #fff #fff #a0a0a0;box-shadow:inset 1px 1px 0 #696969, inset -1px -1px 0 #e3e3e3;"></div><svg style="left:4px;top:3px" width="7" height="7" viewBox="0 0 7 7" shape-rendering="crispEdges"><path d="M0 2h1v3h-1zM1 3h1v3h-1zM2 4h1v3h-1zM3 3h1v3h-1zM4 2h1v3h-1zM5 1h1v3h-1zM6 0h1v3h-1z" fill="#000"/></svg></div>
<span style="left:257.30px;top:430.59px;font-size:11px;line-height:13px;color:#000;letter-spacing:0.054px;">Datei - Verwaltung - Benutzer - Einstellungen kopieren</span>
<div style="left:629px;top:428px;width:18px;height:16px;overflow:hidden;"><div style="left:0;top:0;width:16px;height:14px;background:#f0f0f0;border:1px solid;border-color:#fff #696969 #696969 #fff;box-shadow:inset -1px -1px 0 #a0a0a0;"></div><div style="left:5px;top:10px;width:1px;height:1px;background:#7a1f8a;box-shadow:3px 0 0 #7a1f8a,6px 0 0 #7a1f8a;"></div></div>
<div style="left:672px;top:429px;width:13px;height:13px;overflow:hidden;"><div style="left:0;top:0;width:11px;height:11px;background:#fff;border:1px solid;border-color:#a0a0a0 #fff #fff #a0a0a0;box-shadow:inset 1px 1px 0 #696969, inset -1px -1px 0 #e3e3e3;"></div><svg style="left:4px;top:3px" width="7" height="7" viewBox="0 0 7 7" shape-rendering="crispEdges"><path d="M0 2h1v3h-1zM1 3h1v3h-1zM2 4h1v3h-1zM3 3h1v3h-1zM4 2h1v3h-1zM5 1h1v3h-1zM6 0h1v3h-1z" fill="#000"/></svg></div>
<span style="left:257.30px;top:447.59px;font-size:11px;line-height:13px;color:#000;letter-spacing:0.039px;">Datei - Verwaltung - Benutzer - Formularberechtigungen</span>
<div style="left:629px;top:445px;width:18px;height:16px;overflow:hidden;"><div style="left:0;top:0;width:16px;height:14px;background:#f0f0f0;border:1px solid;border-color:#fff #696969 #696969 #fff;box-shadow:inset -1px -1px 0 #a0a0a0;"></div><div style="left:5px;top:10px;width:1px;height:1px;background:#7a1f8a;box-shadow:3px 0 0 #7a1f8a,6px 0 0 #7a1f8a;"></div></div>
<div style="left:672px;top:446px;width:13px;height:13px;overflow:hidden;"><div style="left:0;top:0;width:11px;height:11px;background:#fff;border:1px solid;border-color:#a0a0a0 #fff #fff #a0a0a0;box-shadow:inset 1px 1px 0 #696969, inset -1px -1px 0 #e3e3e3;"></div><svg style="left:4px;top:3px" width="7" height="7" viewBox="0 0 7 7" shape-rendering="crispEdges"><path d="M0 2h1v3h-1zM1 3h1v3h-1zM2 4h1v3h-1zM3 3h1v3h-1zM4 2h1v3h-1zM5 1h1v3h-1zM6 0h1v3h-1z" fill="#000"/></svg></div>
<span style="left:257.30px;top:464.59px;font-size:11px;line-height:13px;color:#000;letter-spacing:0.026px;">Datei - Verwaltung - Benutzer - Zugangsdatenverwaltung</span>
<div style="left:629px;top:462px;width:18px;height:16px;overflow:hidden;"><div style="left:0;top:0;width:16px;height:14px;background:#f0f0f0;border:1px solid;border-color:#fff #696969 #696969 #fff;box-shadow:inset -1px -1px 0 #a0a0a0;"></div><div style="left:5px;top:10px;width:1px;height:1px;background:#7a1f8a;box-shadow:3px 0 0 #7a1f8a,6px 0 0 #7a1f8a;"></div></div>
<div style="left:672px;top:463px;width:13px;height:13px;overflow:hidden;"><div style="left:0;top:0;width:11px;height:11px;background:#fff;border:1px solid;border-color:#a0a0a0 #fff #fff #a0a0a0;box-shadow:inset 1px 1px 0 #696969, inset -1px -1px 0 #e3e3e3;"></div><svg style="left:4px;top:3px" width="7" height="7" viewBox="0 0 7 7" shape-rendering="crispEdges"><path d="M0 2h1v3h-1zM1 3h1v3h-1zM2 4h1v3h-1zM3 3h1v3h-1zM4 2h1v3h-1zM5 1h1v3h-1zM6 0h1v3h-1z" fill="#000"/></svg></div>
<span style="left:257.30px;top:481.59px;font-size:11px;line-height:13px;color:#000;letter-spacing:0.064px;">Datei - Verwaltung - Datenbank-Assistent</span>
<div style="left:629px;top:479px;width:18px;height:16px;overflow:hidden;"><div style="left:0;top:0;width:16px;height:14px;background:#f0f0f0;border:1px solid;border-color:#fff #696969 #696969 #fff;box-shadow:inset -1px -1px 0 #a0a0a0;"></div><div style="left:5px;top:10px;width:1px;height:1px;background:#7a1f8a;box-shadow:3px 0 0 #7a1f8a,6px 0 0 #7a1f8a;"></div></div>
<div style="left:672px;top:480px;width:13px;height:13px;overflow:hidden;"><div style="left:0;top:0;width:11px;height:11px;background:#fff;border:1px solid;border-color:#a0a0a0 #fff #fff #a0a0a0;box-shadow:inset 1px 1px 0 #696969, inset -1px -1px 0 #e3e3e3;"></div><svg style="left:4px;top:3px" width="7" height="7" viewBox="0 0 7 7" shape-rendering="crispEdges"><path d="M0 2h1v3h-1zM1 3h1v3h-1zM2 4h1v3h-1zM3 3h1v3h-1zM4 2h1v3h-1zM5 1h1v3h-1zM6 0h1v3h-1z" fill="#000"/></svg></div>
<span style="left:257.30px;top:498.59px;font-size:11px;line-height:13px;color:#000;letter-spacing:0.038px;">Datei - Verwaltung - Developer Mode</span>
<div style="left:629px;top:496px;width:18px;height:16px;overflow:hidden;"><div style="left:0;top:0;width:16px;height:14px;background:#f0f0f0;border:1px solid;border-color:#fff #696969 #696969 #fff;box-shadow:inset -1px -1px 0 #a0a0a0;"></div><div style="left:5px;top:10px;width:1px;height:1px;background:#7a1f8a;box-shadow:3px 0 0 #7a1f8a,6px 0 0 #7a1f8a;"></div></div>
<div style="left:672px;top:497px;width:13px;height:13px;overflow:hidden;"><div style="left:0;top:0;width:11px;height:11px;background:#fff;border:1px solid;border-color:#a0a0a0 #fff #fff #a0a0a0;box-shadow:inset 1px 1px 0 #696969, inset -1px -1px 0 #e3e3e3;"></div><svg style="left:4px;top:3px" width="7" height="7" viewBox="0 0 7 7" shape-rendering="crispEdges"><path d="M0 2h1v3h-1zM1 3h1v3h-1zM2 4h1v3h-1zM3 3h1v3h-1zM4 2h1v3h-1zM5 1h1v3h-1zM6 0h1v3h-1z" fill="#000"/></svg></div>
<span style="left:257.30px;top:515.59px;font-size:11px;line-height:13px;color:#000;letter-spacing:0.049px;">Datei - Verwaltung - Einstellungen</span>
<div style="left:629px;top:513px;width:18px;height:16px;overflow:hidden;"><div style="left:0;top:0;width:16px;height:14px;background:#f0f0f0;border:1px solid;border-color:#fff #696969 #696969 #fff;box-shadow:inset -1px -1px 0 #a0a0a0;"></div><div style="left:5px;top:10px;width:1px;height:1px;background:#7a1f8a;box-shadow:3px 0 0 #7a1f8a,6px 0 0 #7a1f8a;"></div></div>
<div style="left:672px;top:514px;width:13px;height:13px;overflow:hidden;"><div style="left:0;top:0;width:11px;height:11px;background:#fff;border:1px solid;border-color:#a0a0a0 #fff #fff #a0a0a0;box-shadow:inset 1px 1px 0 #696969, inset -1px -1px 0 #e3e3e3;"></div><svg style="left:4px;top:3px" width="7" height="7" viewBox="0 0 7 7" shape-rendering="crispEdges"><path d="M0 2h1v3h-1zM1 3h1v3h-1zM2 4h1v3h-1zM3 3h1v3h-1zM4 2h1v3h-1zM5 1h1v3h-1zM6 0h1v3h-1z" fill="#000"/></svg></div>
<span style="left:257.30px;top:532.59px;font-size:11px;line-height:13px;color:#000;letter-spacing:0.069px;">Datei - Verwaltung - Einstellungs-Report</span>
<div style="left:629px;top:530px;width:18px;height:16px;overflow:hidden;"><div style="left:0;top:0;width:16px;height:14px;background:#f0f0f0;border:1px solid;border-color:#fff #696969 #696969 #fff;box-shadow:inset -1px -1px 0 #a0a0a0;"></div><div style="left:5px;top:10px;width:1px;height:1px;background:#7a1f8a;box-shadow:3px 0 0 #7a1f8a,6px 0 0 #7a1f8a;"></div></div>
<div style="left:672px;top:531px;width:13px;height:13px;overflow:hidden;"><div style="left:0;top:0;width:11px;height:11px;background:#fff;border:1px solid;border-color:#a0a0a0 #fff #fff #a0a0a0;box-shadow:inset 1px 1px 0 #696969, inset -1px -1px 0 #e3e3e3;"></div><svg style="left:4px;top:3px" width="7" height="7" viewBox="0 0 7 7" shape-rendering="crispEdges"><path d="M0 2h1v3h-1zM1 3h1v3h-1zM2 4h1v3h-1zM3 3h1v3h-1zM4 2h1v3h-1zM5 1h1v3h-1zM6 0h1v3h-1z" fill="#000"/></svg></div>
<span style="left:257.30px;top:549.59px;font-size:11px;line-height:13px;color:#000;letter-spacing:0.030px;">Datei - Verwaltung - Export/Import</span>
<div style="left:629px;top:547px;width:18px;height:16px;overflow:hidden;"><div style="left:0;top:0;width:16px;height:14px;background:#f0f0f0;border:1px solid;border-color:#fff #696969 #696969 #fff;box-shadow:inset -1px -1px 0 #a0a0a0;"></div><div style="left:5px;top:10px;width:1px;height:1px;background:#7a1f8a;box-shadow:3px 0 0 #7a1f8a,6px 0 0 #7a1f8a;"></div></div>
<div style="left:672px;top:548px;width:13px;height:13px;overflow:hidden;"><div style="left:0;top:0;width:11px;height:11px;background:#fff;border:1px solid;border-color:#a0a0a0 #fff #fff #a0a0a0;box-shadow:inset 1px 1px 0 #696969, inset -1px -1px 0 #e3e3e3;"></div><svg style="left:4px;top:3px" width="7" height="7" viewBox="0 0 7 7" shape-rendering="crispEdges"><path d="M0 2h1v3h-1zM1 3h1v3h-1zM2 4h1v3h-1zM3 3h1v3h-1zM4 2h1v3h-1zM5 1h1v3h-1zM6 0h1v3h-1z" fill="#000"/></svg></div>
<span style="left:257.30px;top:566.59px;font-size:11px;line-height:13px;color:#000;letter-spacing:0.025px;">Datei - Verwaltung - Export/Import - Import</span>
<div style="left:629px;top:564px;width:18px;height:16px;overflow:hidden;"><div style="left:0;top:0;width:16px;height:14px;background:#f0f0f0;border:1px solid;border-color:#fff #696969 #696969 #fff;box-shadow:inset -1px -1px 0 #a0a0a0;"></div><div style="left:5px;top:10px;width:1px;height:1px;background:#7a1f8a;box-shadow:3px 0 0 #7a1f8a,6px 0 0 #7a1f8a;"></div></div>
<div style="left:672px;top:565px;width:13px;height:13px;overflow:hidden;"><div style="left:0;top:0;width:11px;height:11px;background:#fff;border:1px solid;border-color:#a0a0a0 #fff #fff #a0a0a0;box-shadow:inset 1px 1px 0 #696969, inset -1px -1px 0 #e3e3e3;"></div><svg style="left:4px;top:3px" width="7" height="7" viewBox="0 0 7 7" shape-rendering="crispEdges"><path d="M0 2h1v3h-1zM1 3h1v3h-1zM2 4h1v3h-1zM3 3h1v3h-1zM4 2h1v3h-1zM5 1h1v3h-1zM6 0h1v3h-1z" fill="#000"/></svg></div>
<span style="left:257.30px;top:583.59px;font-size:11px;line-height:13px;color:#000;letter-spacing:0.057px;">Datei - Verwaltung - Lizenz</span>
<div style="left:629px;top:581px;width:18px;height:16px;overflow:hidden;"><div style="left:0;top:0;width:16px;height:14px;background:#f0f0f0;border:1px solid;border-color:#fff #696969 #696969 #fff;box-shadow:inset -1px -1px 0 #a0a0a0;"></div><div style="left:5px;top:10px;width:1px;height:1px;background:#7a1f8a;box-shadow:3px 0 0 #7a1f8a,6px 0 0 #7a1f8a;"></div></div>
<div style="left:672px;top:582px;width:13px;height:13px;overflow:hidden;"><div style="left:0;top:0;width:11px;height:11px;background:#fff;border:1px solid;border-color:#a0a0a0 #fff #fff #a0a0a0;box-shadow:inset 1px 1px 0 #696969, inset -1px -1px 0 #e3e3e3;"></div><svg style="left:4px;top:3px" width="7" height="7" viewBox="0 0 7 7" shape-rendering="crispEdges"><path d="M0 2h1v3h-1zM1 3h1v3h-1zM2 4h1v3h-1zM3 3h1v3h-1zM4 2h1v3h-1zM5 1h1v3h-1zM6 0h1v3h-1z" fill="#000"/></svg></div>
<div style="left:629px;top:598px;width:18px;height:4px;overflow:hidden;"><div style="left:0;top:0;width:16px;height:14px;background:#f0f0f0;border:1px solid;border-color:#fff #696969 #696969 #fff;box-shadow:inset -1px -1px 0 #a0a0a0;"></div><div style="left:5px;top:10px;width:1px;height:1px;background:#7a1f8a;box-shadow:3px 0 0 #7a1f8a,6px 0 0 #7a1f8a;"></div></div>
<div style="left:672px;top:599px;width:13px;height:3px;overflow:hidden;"><div style="left:0;top:0;width:11px;height:11px;background:#fff;border:1px solid;border-color:#a0a0a0 #fff #fff #a0a0a0;box-shadow:inset 1px 1px 0 #696969, inset -1px -1px 0 #e3e3e3;"></div><svg style="left:4px;top:3px" width="7" height="7" viewBox="0 0 7 7" shape-rendering="crispEdges"><path d="M0 2h1v3h-1zM1 3h1v3h-1zM2 4h1v3h-1zM3 3h1v3h-1zM4 2h1v3h-1zM5 1h1v3h-1zM6 0h1v3h-1z" fill="#000"/></svg></div>
<div style="left:903px;top:239px;width:16px;height:363px;background:#f0f0f0;"></div>
<div style="left:903px;top:256px;width:15px;height:17px;background:#c1c1c1;"></div>
<svg style="left:904.5px;top:241.5px" width="12" height="12" viewBox="-6 -6 12 12"><path d="M-3 2 L0 -1.4 L3 2" fill="none" stroke="#585858" stroke-width="2.3"/></svg>
<svg style="left:904.5px;top:587.2px" width="12" height="12" viewBox="-6 -6 12 12"><path d="M-3 -2 L0 1.4 L3 -2" fill="none" stroke="#585858" stroke-width="2.3"/></svg>
<div style="left:255px;top:602px;width:664px;height:16px;background:#f0f0f0;"></div>
<div style="left:272px;top:602px;width:280px;height:16px;background:#cdcdcd;"></div>
<svg style="left:257px;top:603.6px" width="12" height="12" viewBox="-6 -6 12 12"><path d="M2 -3 L-1.4 0 L2 3" fill="none" stroke="#585858" stroke-width="2.3"/></svg>
<svg style="left:887.8px;top:603.6px" width="12" height="12" viewBox="-6 -6 12 12"><path d="M-2 -3 L1.4 0 L-2 3" fill="none" stroke="#585858" stroke-width="2.3"/></svg>
<div style="left:253px;top:618px;width:667px;height:1px;background:#e9e9e9;"></div>
<div style="left:253px;top:619px;width:668px;height:1px;background:#fff;"></div>
<div style="left:255px;top:622px;width:204px;height:18px;background:#cccccc;border:1px solid #bfbfbf;"></div>
<span style="left:265.10px;top:626.49px;font-size:11px;line-height:13px;color:#a0a0a0;letter-spacing:0.046px;text-shadow:1px 1px 0 #fff;">Konfigurationseinstellungen speichern</span>
<div style="left:464px;top:622px;width:248px;height:18px;background:#cccccc;border:1px solid #bfbfbf;"></div>
<span style="left:509.00px;top:626.49px;font-size:11px;line-height:13px;color:#a0a0a0;letter-spacing:0.035px;text-shadow:1px 1px 0 #fff;">Änderungen rückgängig machen</span>
</body></html>
